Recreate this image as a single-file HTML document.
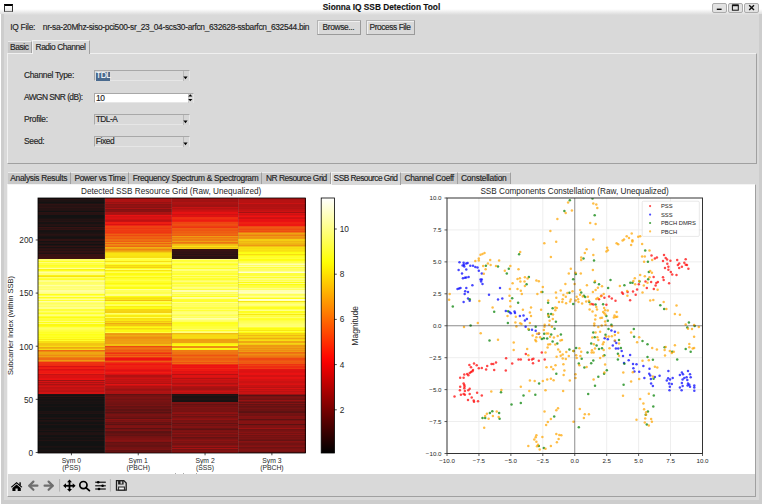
<!DOCTYPE html>
<html><head><meta charset="utf-8">
<style>
*{margin:0;padding:0;box-sizing:border-box}
html,body{width:762px;height:504px;overflow:hidden;background:#d9d9d9;font-family:"Liberation Sans",sans-serif;color:#000}
.a{position:absolute}
.t{position:absolute;font-size:8.4px;letter-spacing:-0.3px;line-height:10px;white-space:nowrap;color:#1e1e1e;-webkit-text-stroke:0.15px #1e1e1e}
.btn{position:absolute;background:#d9d9d9;border:1px solid #b4b4b4;border-right-color:#9a9a9a;border-bottom-color:#9a9a9a;box-shadow:inset 1px 1px 0 #f0f0f0}
.cb{position:absolute;background:#d9d9d9;border:1px solid #a8a8a8;border-bottom-color:#e6e6e6;border-right-color:#e6e6e6}
.tab{position:absolute;background:#c9c9c9;border-top:1px solid #ececec;border-right:1px solid #a0a0a0;height:12px}
.tabs{position:absolute;background:#d9d9d9;border-top:1px solid #f2f2f2;border-left:1px solid #f2f2f2;border-right:1px solid #a0a0a0}
</style></head><body>
<!-- title bar -->
<div class="a" style="left:0;top:0;width:762px;height:16px;background:linear-gradient(#fff 0,#fff 9px,#d9d9d9 15px)"></div>
<div class="a" style="left:4px;top:4px;width:8.8px;height:7.5px;border:1px solid #333;border-top:2px solid #000;border-bottom-color:#777;background:linear-gradient(#fff,#e4e4e4)"></div>
<div class="t" style="left:322.8px;top:1.6px;font-weight:bold;font-size:8.3px;letter-spacing:0;color:#111">Sionna IQ SSB Detection Tool</div>
<div class="a" style="left:712px;top:2.5px;width:14.5px;height:10.5px;border:1px solid #ababab;border-radius:2px;background:#e2e2e2"></div>
<div class="a" style="left:728px;top:2.5px;width:14.5px;height:10.5px;border:1px solid #ababab;border-radius:2px;background:#e2e2e2"></div>
<div class="a" style="left:744.3px;top:2.5px;width:14.5px;height:10.5px;border:1px solid #ababab;border-radius:2px;background:#e2e2e2"></div>
<svg class="a" style="left:700px;top:0" width="62" height="16" viewBox="700 0 62 16">
<rect x="716.8" y="8.6" width="4.8" height="1.4" fill="#111"/>
<rect x="732.4" y="5" width="5.9" height="5.2" fill="none" stroke="#111" stroke-width="1"/>
<rect x="732.4" y="4.6" width="5.9" height="1.6" fill="#111"/>
<path d="M749.2,5.2 L754,10 M754,5.2 L749.2,10" stroke="#111" stroke-width="1.4"/>
</svg>
<!-- window borders -->
<div class="a" style="left:0;top:14px;width:1px;height:490px;background:#fff"></div>
<div class="a" style="left:1px;top:14px;width:3px;height:490px;background:#cdcdcd"></div>
<div class="a" style="left:759px;top:14px;width:3px;height:490px;background:#cdcdcd"></div>
<div class="a" style="left:1px;top:500px;width:761px;height:4px;background:#cdcdcd"></div>

<!-- IQ file row -->
<div class="t" style="left:10.25px;top:22px;letter-spacing:-0.27px">IQ File:</div>
<div class="t" style="left:42.8px;top:22px;letter-spacing:-0.32px">nr-sa-20Mhz-siso-pci500-sr_23_04-scs30-arfcn_632628-ssbarfcn_632544.bin</div>
<div class="btn" style="left:317px;top:20px;width:44px;height:15px"></div>
<div class="t" style="left:322.5px;top:22px;letter-spacing:-0.36px">Browse...</div>
<div class="btn" style="left:366px;top:20px;width:49px;height:15px"></div>
<div class="t" style="left:369.5px;top:22px;letter-spacing:-0.43px">Process File</div>

<!-- top notebook -->
<div class="a" style="left:7px;top:53px;width:750px;height:111px;border:1px solid #f0f0f0;border-right-color:#a0a0a0;border-bottom-color:#a0a0a0"></div>
<div class="tab" style="left:8px;top:41px;width:24px"></div>
<div class="t" style="left:10px;top:42px;letter-spacing:-0.38px">Basic</div>
<div class="tabs" style="left:32px;top:40px;width:58px;height:14px"></div>
<div class="t" style="left:35.5px;top:42px;letter-spacing:-0.42px">Radio Channel</div>

<div class="t" style="left:24px;top:70px">Channel Type:</div>
<div class="cb" style="left:94px;top:70.3px;width:95.5px;height:11.2px"></div><div class="a" style="left:182.5px;top:71.0px;width:6.5px;height:10px;border-left:1px solid #b8b8b8;background:#d6d6d6"></div>
<div class="a" style="left:95.5px;top:71.5px;width:14px;height:9px;background:#4a6a8e"></div>
<div class="t" style="left:96px;top:70.4px;color:#fff;-webkit-text-stroke:0.1px #fff;letter-spacing:-0.4px">TDL</div>

<div class="t" style="left:24px;top:92px;letter-spacing:-0.55px">AWGN SNR (dB):</div>
<div class="cb" style="left:94px;top:92.5px;width:99.5px;height:10.5px;background:#fff"></div><div class="a" style="left:188px;top:93.5px;width:5px;height:9px;background:#d9d9d9;border-left:1px solid #c8c8c8"></div>
<div class="t" style="left:96px;top:92.5px">10</div>

<div class="t" style="left:24px;top:114px">Profile:</div>
<div class="cb" style="left:94px;top:114.3px;width:95.5px;height:11.2px"></div><div class="a" style="left:182.5px;top:115.0px;width:6.5px;height:10px;border-left:1px solid #b8b8b8;background:#d6d6d6"></div>
<div class="t" style="left:95.8px;top:114.2px;letter-spacing:-0.55px">TDL-A</div>

<div class="t" style="left:24px;top:136px">Seed:</div>
<div class="cb" style="left:94px;top:136.3px;width:95.5px;height:11.2px"></div><div class="a" style="left:182.5px;top:137.0px;width:6.5px;height:10px;border-left:1px solid #b8b8b8;background:#d6d6d6"></div>
<div class="t" style="left:95.8px;top:136.2px;letter-spacing:-0.4px">Fixed</div>

<svg class="a" style="left:0;top:0" width="200" height="160" viewBox="0 0 200 160"><polygon points="183.4,76.6 187.6,76.6 185.5,79.2" fill="#000"/><polygon points="183.4,120.6 187.6,120.6 185.5,123.2" fill="#000"/><polygon points="183.4,142.6 187.6,142.6 185.5,145.2" fill="#000"/><polygon points="188.2,96.6 192.4,96.6 190.3,94.2" fill="#000"/><polygon points="188.2,98.9 192.4,98.9 190.3,101.3" fill="#000"/></svg>
<!-- bottom notebook -->
<div class="a" style="left:7px;top:184px;width:749px;height:313px;border:1px solid #f4f4f4;border-right-color:#a0a0a0;border-bottom-color:#a0a0a0"></div>
<div class="a" style="left:8px;top:185px;width:747px;height:289px;background:#fff"></div>

<div class="tab" style="left:8px;top:172px;width:63px"></div>
<div class="t" style="left:10.3px;top:173px;letter-spacing:-0.29px">Analysis Results</div>
<div class="tab" style="left:71px;top:172px;width:57.5px"></div>
<div class="t" style="left:74.4px;top:173px;letter-spacing:-0.3px">Power vs Time</div>
<div class="tab" style="left:128.5px;top:172px;width:133px"></div>
<div class="t" style="left:132.7px;top:173px;letter-spacing:-0.32px">Frequency Spectrum &amp; Spectrogram</div>
<div class="tab" style="left:261.5px;top:172px;width:69px"></div>
<div class="t" style="left:265.9px;top:173px;letter-spacing:-0.47px">NR Resource Grid</div>
<div class="tabs" style="left:330.5px;top:171.8px;width:70px;height:13.5px"></div>
<div class="t" style="left:333.6px;top:173px;letter-spacing:-0.54px">SSB Resource Grid</div>
<div class="tab" style="left:401px;top:172px;width:56.5px"></div>
<div class="t" style="left:404.5px;top:173px;letter-spacing:-0.31px">Channel Coeff</div>
<div class="tab" style="left:457.5px;top:172px;width:53px"></div>
<div class="t" style="left:461px;top:173px;letter-spacing:-0.22px">Constellation</div>

<!-- FIGURE -->
<svg class="a" style="left:0;top:0" width="762" height="504" viewBox="0 0 762 504">
<g shape-rendering="crispEdges">
<rect x="38.00" y="198.00" width="67.12" height="1.113" fill="#1c1212"/>
<rect x="38.00" y="199.06" width="67.12" height="1.113" fill="#271212"/>
<rect x="38.00" y="200.12" width="67.12" height="1.113" fill="#1d1212"/>
<rect x="38.00" y="201.19" width="67.12" height="1.113" fill="#1c1212"/>
<rect x="38.00" y="202.25" width="67.12" height="1.113" fill="#131212"/>
<rect x="38.00" y="203.31" width="67.12" height="1.113" fill="#1d1212"/>
<rect x="38.00" y="204.38" width="67.12" height="1.113" fill="#2f1212"/>
<rect x="38.00" y="205.44" width="67.12" height="1.113" fill="#261212"/>
<rect x="38.00" y="206.50" width="67.12" height="1.113" fill="#2e1212"/>
<rect x="38.00" y="207.56" width="67.12" height="1.113" fill="#231212"/>
<rect x="38.00" y="208.62" width="67.12" height="1.113" fill="#251212"/>
<rect x="38.00" y="209.69" width="67.12" height="1.113" fill="#221212"/>
<rect x="38.00" y="210.75" width="67.12" height="1.113" fill="#121212"/>
<rect x="38.00" y="211.81" width="67.12" height="1.113" fill="#2b1212"/>
<rect x="38.00" y="212.88" width="67.12" height="2.175" fill="#271212"/>
<rect x="38.00" y="215.00" width="67.12" height="2.175" fill="#121212"/>
<rect x="38.00" y="217.12" width="67.12" height="1.113" fill="#141212"/>
<rect x="38.00" y="218.19" width="67.12" height="1.113" fill="#1a1212"/>
<rect x="38.00" y="219.25" width="67.12" height="1.113" fill="#241212"/>
<rect x="38.00" y="220.31" width="67.12" height="1.113" fill="#1f1212"/>
<rect x="38.00" y="221.38" width="67.12" height="1.113" fill="#271212"/>
<rect x="38.00" y="222.44" width="67.12" height="1.113" fill="#171212"/>
<rect x="38.00" y="223.50" width="67.12" height="1.113" fill="#241212"/>
<rect x="38.00" y="224.56" width="67.12" height="1.113" fill="#251212"/>
<rect x="38.00" y="225.62" width="67.12" height="1.113" fill="#171212"/>
<rect x="38.00" y="226.69" width="67.12" height="1.113" fill="#371212"/>
<rect x="38.00" y="227.75" width="67.12" height="1.113" fill="#271212"/>
<rect x="38.00" y="228.81" width="67.12" height="1.113" fill="#301212"/>
<rect x="38.00" y="229.88" width="67.12" height="1.113" fill="#181212"/>
<rect x="38.00" y="230.94" width="67.12" height="1.113" fill="#161212"/>
<rect x="38.00" y="232.00" width="67.12" height="1.113" fill="#1b1212"/>
<rect x="38.00" y="233.06" width="67.12" height="1.113" fill="#1e1212"/>
<rect x="38.00" y="234.12" width="67.12" height="1.113" fill="#281212"/>
<rect x="38.00" y="235.19" width="67.12" height="1.113" fill="#231212"/>
<rect x="38.00" y="236.25" width="67.12" height="1.113" fill="#1a1212"/>
<rect x="38.00" y="237.31" width="67.12" height="1.113" fill="#131212"/>
<rect x="38.00" y="238.38" width="67.12" height="1.113" fill="#191212"/>
<rect x="38.00" y="239.44" width="67.12" height="1.113" fill="#301212"/>
<rect x="38.00" y="240.50" width="67.12" height="1.113" fill="#151212"/>
<rect x="38.00" y="241.56" width="67.12" height="1.113" fill="#231212"/>
<rect x="38.00" y="242.62" width="67.12" height="1.113" fill="#261212"/>
<rect x="38.00" y="243.69" width="67.12" height="1.113" fill="#121212"/>
<rect x="38.00" y="244.75" width="67.12" height="1.113" fill="#211212"/>
<rect x="38.00" y="245.81" width="67.12" height="1.113" fill="#311212"/>
<rect x="38.00" y="246.88" width="67.12" height="1.113" fill="#181212"/>
<rect x="38.00" y="247.94" width="67.12" height="1.113" fill="#2a1212"/>
<rect x="38.00" y="249.00" width="67.12" height="1.113" fill="#2d1212"/>
<rect x="38.00" y="250.06" width="67.12" height="1.113" fill="#261212"/>
<rect x="38.00" y="251.12" width="67.12" height="1.113" fill="#351212"/>
<rect x="38.00" y="252.19" width="67.12" height="1.113" fill="#2f1212"/>
<rect x="38.00" y="253.25" width="67.12" height="1.113" fill="#211212"/>
<rect x="38.00" y="254.31" width="67.12" height="1.113" fill="#3a1212"/>
<rect x="38.00" y="255.38" width="67.12" height="1.113" fill="#381212"/>
<rect x="38.00" y="256.44" width="67.12" height="1.113" fill="#3c1212"/>
<rect x="38.00" y="257.50" width="67.12" height="1.113" fill="#421212"/>
<rect x="38.00" y="258.56" width="67.12" height="1.113" fill="#ffff6d"/>
<rect x="38.00" y="259.62" width="67.12" height="1.113" fill="#ffff61"/>
<rect x="38.00" y="260.69" width="67.12" height="1.113" fill="#ffff21"/>
<rect x="38.00" y="261.75" width="67.12" height="1.113" fill="#ffff78"/>
<rect x="38.00" y="262.81" width="67.12" height="1.113" fill="#ffff40"/>
<rect x="38.00" y="263.88" width="67.12" height="1.113" fill="#ffff47"/>
<rect x="38.00" y="264.94" width="67.12" height="1.113" fill="#ffff22"/>
<rect x="38.00" y="266.00" width="67.12" height="1.113" fill="#ffff30"/>
<rect x="38.00" y="267.06" width="67.12" height="1.113" fill="#ffff44"/>
<rect x="38.00" y="268.12" width="67.12" height="1.113" fill="#ffff97"/>
<rect x="38.00" y="269.19" width="67.12" height="1.113" fill="#fbf112"/>
<rect x="38.00" y="270.25" width="67.12" height="1.113" fill="#feff1a"/>
<rect x="38.00" y="271.31" width="67.12" height="1.113" fill="#ffff67"/>
<rect x="38.00" y="272.38" width="67.12" height="1.113" fill="#ffff9e"/>
<rect x="38.00" y="273.44" width="67.12" height="1.113" fill="#ffff76"/>
<rect x="38.00" y="274.50" width="67.12" height="1.113" fill="#fcf512"/>
<rect x="38.00" y="275.56" width="67.12" height="1.113" fill="#f8e112"/>
<rect x="38.00" y="276.62" width="67.12" height="1.113" fill="#ffff6c"/>
<rect x="38.00" y="277.69" width="67.12" height="1.113" fill="#ffff3b"/>
<rect x="38.00" y="278.75" width="67.12" height="1.113" fill="#ffff29"/>
<rect x="38.00" y="279.81" width="67.12" height="1.113" fill="#ffff88"/>
<rect x="38.00" y="280.88" width="67.12" height="1.113" fill="#ffff8e"/>
<rect x="38.00" y="281.94" width="67.12" height="1.113" fill="#ffff63"/>
<rect x="38.00" y="283.00" width="67.12" height="1.113" fill="#ffff67"/>
<rect x="38.00" y="284.06" width="67.12" height="1.113" fill="#ffff70"/>
<rect x="38.00" y="285.12" width="67.12" height="1.113" fill="#ffffa5"/>
<rect x="38.00" y="286.19" width="67.12" height="1.113" fill="#ffff78"/>
<rect x="38.00" y="287.25" width="67.12" height="1.113" fill="#ffff74"/>
<rect x="38.00" y="288.31" width="67.12" height="1.113" fill="#ffff82"/>
<rect x="38.00" y="289.38" width="67.12" height="1.113" fill="#ffff70"/>
<rect x="38.00" y="290.44" width="67.12" height="1.113" fill="#ffffa1"/>
<rect x="38.00" y="291.50" width="67.12" height="1.113" fill="#ffff92"/>
<rect x="38.00" y="292.56" width="67.12" height="1.113" fill="#ffff80"/>
<rect x="38.00" y="293.62" width="67.12" height="1.113" fill="#feff17"/>
<rect x="38.00" y="294.69" width="67.12" height="1.113" fill="#ffff4e"/>
<rect x="38.00" y="295.75" width="67.12" height="1.113" fill="#ffff8a"/>
<rect x="38.00" y="296.81" width="67.12" height="1.113" fill="#ffff1b"/>
<rect x="38.00" y="297.88" width="67.12" height="1.113" fill="#ffff5e"/>
<rect x="38.00" y="298.94" width="67.12" height="1.113" fill="#ffff8e"/>
<rect x="38.00" y="300.00" width="67.12" height="1.113" fill="#ffff2d"/>
<rect x="38.00" y="301.06" width="67.12" height="1.113" fill="#ffffa5"/>
<rect x="38.00" y="302.12" width="67.12" height="1.113" fill="#ffff78"/>
<rect x="38.00" y="303.19" width="67.12" height="1.113" fill="#ffff5a"/>
<rect x="38.00" y="304.25" width="67.12" height="1.113" fill="#ffff6d"/>
<rect x="38.00" y="305.31" width="67.12" height="1.113" fill="#ffff7a"/>
<rect x="38.00" y="306.38" width="67.12" height="1.113" fill="#ffff63"/>
<rect x="38.00" y="307.44" width="67.12" height="1.113" fill="#ffff8c"/>
<rect x="38.00" y="308.50" width="67.12" height="1.113" fill="#ffff33"/>
<rect x="38.00" y="309.56" width="67.12" height="1.113" fill="#ffff3b"/>
<rect x="38.00" y="310.62" width="67.12" height="1.113" fill="#ffff70"/>
<rect x="38.00" y="311.69" width="67.12" height="1.113" fill="#ffff49"/>
<rect x="38.00" y="312.75" width="67.12" height="1.113" fill="#ffff26"/>
<rect x="38.00" y="313.81" width="67.12" height="1.113" fill="#ffff69"/>
<rect x="38.00" y="314.88" width="67.12" height="1.113" fill="#ffff7b"/>
<rect x="38.00" y="315.94" width="67.12" height="1.113" fill="#ffff33"/>
<rect x="38.00" y="317.00" width="67.12" height="1.113" fill="#fdfc12"/>
<rect x="38.00" y="318.06" width="67.12" height="1.113" fill="#ffff3c"/>
<rect x="38.00" y="319.12" width="67.12" height="1.113" fill="#ffff3a"/>
<rect x="38.00" y="320.19" width="67.12" height="1.113" fill="#ffff34"/>
<rect x="38.00" y="321.25" width="67.12" height="1.113" fill="#ffff72"/>
<rect x="38.00" y="322.31" width="67.12" height="1.113" fill="#feff16"/>
<rect x="38.00" y="323.38" width="67.12" height="1.113" fill="#ffff6a"/>
<rect x="38.00" y="324.44" width="67.12" height="1.113" fill="#fcf912"/>
<rect x="38.00" y="325.50" width="67.12" height="1.113" fill="#ffff1c"/>
<rect x="38.00" y="326.56" width="67.12" height="1.113" fill="#ffff4f"/>
<rect x="38.00" y="327.62" width="67.12" height="1.113" fill="#ffff61"/>
<rect x="38.00" y="328.69" width="67.12" height="1.113" fill="#ffff55"/>
<rect x="38.00" y="329.75" width="67.12" height="1.113" fill="#ffff41"/>
<rect x="38.00" y="330.81" width="67.12" height="1.113" fill="#ffff38"/>
<rect x="38.00" y="331.88" width="67.12" height="1.113" fill="#ffff25"/>
<rect x="38.00" y="332.94" width="67.12" height="1.113" fill="#ffff2f"/>
<rect x="38.00" y="334.00" width="67.12" height="1.113" fill="#feff17"/>
<rect x="38.00" y="335.06" width="67.12" height="1.113" fill="#ffff22"/>
<rect x="38.00" y="336.12" width="67.12" height="1.113" fill="#ffff28"/>
<rect x="38.00" y="337.19" width="67.12" height="1.113" fill="#fefe16"/>
<rect x="38.00" y="338.25" width="67.12" height="1.113" fill="#ffff29"/>
<rect x="38.00" y="339.31" width="67.12" height="1.113" fill="#faee12"/>
<rect x="38.00" y="340.38" width="67.12" height="1.113" fill="#ffff2b"/>
<rect x="38.00" y="341.44" width="67.12" height="1.113" fill="#f8df12"/>
<rect x="38.00" y="342.50" width="67.12" height="1.113" fill="#f3c712"/>
<rect x="38.00" y="343.56" width="67.12" height="1.113" fill="#f3c412"/>
<rect x="38.00" y="344.62" width="67.12" height="1.113" fill="#f4c912"/>
<rect x="38.00" y="345.69" width="67.12" height="1.113" fill="#f7dd12"/>
<rect x="38.00" y="346.75" width="67.12" height="1.113" fill="#eea812"/>
<rect x="38.00" y="347.81" width="67.12" height="1.113" fill="#f0b712"/>
<rect x="38.00" y="348.88" width="67.12" height="1.113" fill="#f6d912"/>
<rect x="38.00" y="349.94" width="67.12" height="1.113" fill="#ee6812"/>
<rect x="38.00" y="351.00" width="67.12" height="1.113" fill="#ee8812"/>
<rect x="38.00" y="352.06" width="67.12" height="2.175" fill="#eea612"/>
<rect x="38.00" y="354.19" width="67.12" height="1.113" fill="#ee9f12"/>
<rect x="38.00" y="355.25" width="67.12" height="1.113" fill="#ee8b12"/>
<rect x="38.00" y="356.31" width="67.12" height="1.113" fill="#eea212"/>
<rect x="38.00" y="357.38" width="67.12" height="1.113" fill="#ee7e12"/>
<rect x="38.00" y="358.44" width="67.12" height="1.113" fill="#ee6d12"/>
<rect x="38.00" y="359.50" width="67.12" height="1.113" fill="#ee9912"/>
<rect x="38.00" y="360.56" width="67.12" height="1.113" fill="#ee7412"/>
<rect x="38.00" y="361.62" width="67.12" height="1.113" fill="#ee3112"/>
<rect x="38.00" y="362.69" width="67.12" height="1.113" fill="#ee3312"/>
<rect x="38.00" y="363.75" width="67.12" height="1.113" fill="#ee2d12"/>
<rect x="38.00" y="364.81" width="67.12" height="1.113" fill="#ee2b12"/>
<rect x="38.00" y="365.88" width="67.12" height="1.113" fill="#d71212"/>
<rect x="38.00" y="366.94" width="67.12" height="1.113" fill="#ee1b12"/>
<rect x="38.00" y="368.00" width="67.12" height="1.113" fill="#ee2012"/>
<rect x="38.00" y="369.06" width="67.12" height="1.113" fill="#d81212"/>
<rect x="38.00" y="370.12" width="67.12" height="1.113" fill="#e71212"/>
<rect x="38.00" y="371.19" width="67.12" height="1.113" fill="#ee1a12"/>
<rect x="38.00" y="372.25" width="67.12" height="1.113" fill="#ee1612"/>
<rect x="38.00" y="373.31" width="67.12" height="1.113" fill="#ee1f12"/>
<rect x="38.00" y="374.38" width="67.12" height="1.113" fill="#c61212"/>
<rect x="38.00" y="375.44" width="67.12" height="1.113" fill="#da1212"/>
<rect x="38.00" y="376.50" width="67.12" height="1.113" fill="#d81212"/>
<rect x="38.00" y="377.56" width="67.12" height="1.113" fill="#e51212"/>
<rect x="38.00" y="378.62" width="67.12" height="1.113" fill="#eb1212"/>
<rect x="38.00" y="379.69" width="67.12" height="1.113" fill="#9d1212"/>
<rect x="38.00" y="380.75" width="67.12" height="1.113" fill="#d81212"/>
<rect x="38.00" y="381.81" width="67.12" height="1.113" fill="#ae1212"/>
<rect x="38.00" y="382.88" width="67.12" height="1.113" fill="#cf1212"/>
<rect x="38.00" y="383.94" width="67.12" height="1.113" fill="#ab1212"/>
<rect x="38.00" y="385.00" width="67.12" height="1.113" fill="#c41212"/>
<rect x="38.00" y="386.06" width="67.12" height="1.113" fill="#d31212"/>
<rect x="38.00" y="387.12" width="67.12" height="1.113" fill="#bd1212"/>
<rect x="38.00" y="388.19" width="67.12" height="1.113" fill="#c11212"/>
<rect x="38.00" y="389.25" width="67.12" height="1.113" fill="#c91212"/>
<rect x="38.00" y="390.31" width="67.12" height="1.113" fill="#be1212"/>
<rect x="38.00" y="391.38" width="67.12" height="1.113" fill="#b91212"/>
<rect x="38.00" y="392.44" width="67.12" height="1.113" fill="#d11212"/>
<rect x="38.00" y="393.50" width="67.12" height="1.113" fill="#1e1212"/>
<rect x="38.00" y="394.56" width="67.12" height="1.113" fill="#131212"/>
<rect x="38.00" y="395.62" width="67.12" height="1.113" fill="#2b1212"/>
<rect x="38.00" y="396.69" width="67.12" height="1.113" fill="#121212"/>
<rect x="38.00" y="397.75" width="67.12" height="1.113" fill="#1d1212"/>
<rect x="38.00" y="398.81" width="67.12" height="1.113" fill="#131212"/>
<rect x="38.00" y="399.88" width="67.12" height="1.113" fill="#161212"/>
<rect x="38.00" y="400.94" width="67.12" height="1.113" fill="#1b1212"/>
<rect x="38.00" y="402.00" width="67.12" height="1.113" fill="#171212"/>
<rect x="38.00" y="403.06" width="67.12" height="1.113" fill="#1a1212"/>
<rect x="38.00" y="404.12" width="67.12" height="2.175" fill="#121212"/>
<rect x="38.00" y="406.25" width="67.12" height="1.113" fill="#1a1212"/>
<rect x="38.00" y="407.31" width="67.12" height="3.237" fill="#121212"/>
<rect x="38.00" y="410.50" width="67.12" height="1.113" fill="#1f1212"/>
<rect x="38.00" y="411.56" width="67.12" height="1.113" fill="#1b1212"/>
<rect x="38.00" y="412.62" width="67.12" height="1.113" fill="#211212"/>
<rect x="38.00" y="413.69" width="67.12" height="1.113" fill="#121212"/>
<rect x="38.00" y="414.75" width="67.12" height="1.113" fill="#151212"/>
<rect x="38.00" y="415.81" width="67.12" height="1.113" fill="#121212"/>
<rect x="38.00" y="416.88" width="67.12" height="1.113" fill="#1b1212"/>
<rect x="38.00" y="417.94" width="67.12" height="1.113" fill="#221212"/>
<rect x="38.00" y="419.00" width="67.12" height="1.113" fill="#121212"/>
<rect x="38.00" y="420.06" width="67.12" height="1.113" fill="#221212"/>
<rect x="38.00" y="421.12" width="67.12" height="1.113" fill="#1d1212"/>
<rect x="38.00" y="422.19" width="67.12" height="1.113" fill="#141212"/>
<rect x="38.00" y="423.25" width="67.12" height="1.113" fill="#121212"/>
<rect x="38.00" y="424.31" width="67.12" height="1.113" fill="#201212"/>
<rect x="38.00" y="425.38" width="67.12" height="1.113" fill="#141212"/>
<rect x="38.00" y="426.44" width="67.12" height="1.113" fill="#121212"/>
<rect x="38.00" y="427.50" width="67.12" height="2.175" fill="#181212"/>
<rect x="38.00" y="429.62" width="67.12" height="1.113" fill="#211212"/>
<rect x="38.00" y="430.69" width="67.12" height="1.113" fill="#121212"/>
<rect x="38.00" y="431.75" width="67.12" height="1.113" fill="#1e1212"/>
<rect x="38.00" y="432.81" width="67.12" height="2.175" fill="#211212"/>
<rect x="38.00" y="434.94" width="67.12" height="1.113" fill="#141212"/>
<rect x="38.00" y="436.00" width="67.12" height="1.113" fill="#121212"/>
<rect x="38.00" y="437.06" width="67.12" height="1.113" fill="#1d1212"/>
<rect x="38.00" y="438.12" width="67.12" height="2.175" fill="#161212"/>
<rect x="38.00" y="440.25" width="67.12" height="1.113" fill="#211212"/>
<rect x="38.00" y="441.31" width="67.12" height="1.113" fill="#131212"/>
<rect x="38.00" y="442.38" width="67.12" height="3.237" fill="#121212"/>
<rect x="38.00" y="445.56" width="67.12" height="1.113" fill="#1c1212"/>
<rect x="38.00" y="446.62" width="67.12" height="1.113" fill="#181212"/>
<rect x="38.00" y="447.69" width="67.12" height="1.113" fill="#121212"/>
<rect x="38.00" y="448.75" width="67.12" height="1.113" fill="#151212"/>
<rect x="38.00" y="449.81" width="67.12" height="1.113" fill="#1c1212"/>
<rect x="38.00" y="450.88" width="67.12" height="1.113" fill="#161212"/>
<rect x="38.00" y="451.94" width="67.12" height="1.113" fill="#201212"/>
<rect x="104.83" y="198.00" width="67.12" height="1.113" fill="#a81212"/>
<rect x="104.83" y="199.06" width="67.12" height="1.113" fill="#ae1212"/>
<rect x="104.83" y="200.12" width="67.12" height="1.113" fill="#ad1212"/>
<rect x="104.83" y="201.19" width="67.12" height="1.113" fill="#af1212"/>
<rect x="104.83" y="202.25" width="67.12" height="1.113" fill="#961212"/>
<rect x="104.83" y="203.31" width="67.12" height="1.113" fill="#a71212"/>
<rect x="104.83" y="204.38" width="67.12" height="1.113" fill="#891212"/>
<rect x="104.83" y="205.44" width="67.12" height="1.113" fill="#921212"/>
<rect x="104.83" y="206.50" width="67.12" height="1.113" fill="#881212"/>
<rect x="104.83" y="207.56" width="67.12" height="1.113" fill="#a91212"/>
<rect x="104.83" y="208.62" width="67.12" height="1.113" fill="#811212"/>
<rect x="104.83" y="209.69" width="67.12" height="1.113" fill="#881212"/>
<rect x="104.83" y="210.75" width="67.12" height="1.113" fill="#871212"/>
<rect x="104.83" y="211.81" width="67.12" height="1.113" fill="#ad1212"/>
<rect x="104.83" y="212.88" width="67.12" height="1.113" fill="#a91212"/>
<rect x="104.83" y="213.94" width="67.12" height="1.113" fill="#af1212"/>
<rect x="104.83" y="215.00" width="67.12" height="1.113" fill="#ea1212"/>
<rect x="104.83" y="216.06" width="67.12" height="1.113" fill="#d21212"/>
<rect x="104.83" y="217.12" width="67.12" height="1.113" fill="#d81212"/>
<rect x="104.83" y="218.19" width="67.12" height="1.113" fill="#dd1212"/>
<rect x="104.83" y="219.25" width="67.12" height="1.113" fill="#cd1212"/>
<rect x="104.83" y="220.31" width="67.12" height="1.113" fill="#be1212"/>
<rect x="104.83" y="221.38" width="67.12" height="1.113" fill="#c61212"/>
<rect x="104.83" y="222.44" width="67.12" height="1.113" fill="#ee1d12"/>
<rect x="104.83" y="223.50" width="67.12" height="1.113" fill="#dc1212"/>
<rect x="104.83" y="224.56" width="67.12" height="1.113" fill="#ee2812"/>
<rect x="104.83" y="225.62" width="67.12" height="1.113" fill="#ee4312"/>
<rect x="104.83" y="226.69" width="67.12" height="1.113" fill="#ee4012"/>
<rect x="104.83" y="227.75" width="67.12" height="1.113" fill="#ee3512"/>
<rect x="104.83" y="228.81" width="67.12" height="1.113" fill="#ee4212"/>
<rect x="104.83" y="229.88" width="67.12" height="1.113" fill="#ee3912"/>
<rect x="104.83" y="230.94" width="67.12" height="1.113" fill="#ee3a12"/>
<rect x="104.83" y="232.00" width="67.12" height="1.113" fill="#ee3512"/>
<rect x="104.83" y="233.06" width="67.12" height="1.113" fill="#ee4512"/>
<rect x="104.83" y="234.12" width="67.12" height="1.113" fill="#ee5f12"/>
<rect x="104.83" y="235.19" width="67.12" height="1.113" fill="#ee4812"/>
<rect x="104.83" y="236.25" width="67.12" height="1.113" fill="#ee5f12"/>
<rect x="104.83" y="237.31" width="67.12" height="1.113" fill="#ee6212"/>
<rect x="104.83" y="238.38" width="67.12" height="1.113" fill="#ee5712"/>
<rect x="104.83" y="239.44" width="67.12" height="1.113" fill="#ee6e12"/>
<rect x="104.83" y="240.50" width="67.12" height="1.113" fill="#ee5e12"/>
<rect x="104.83" y="241.56" width="67.12" height="1.113" fill="#ee8d12"/>
<rect x="104.83" y="242.62" width="67.12" height="1.113" fill="#ee6112"/>
<rect x="104.83" y="243.69" width="67.12" height="1.113" fill="#ee8d12"/>
<rect x="104.83" y="244.75" width="67.12" height="1.113" fill="#ee7d12"/>
<rect x="104.83" y="245.81" width="67.12" height="1.113" fill="#ee6812"/>
<rect x="104.83" y="246.88" width="67.12" height="1.113" fill="#efb312"/>
<rect x="104.83" y="247.94" width="67.12" height="1.113" fill="#eea312"/>
<rect x="104.83" y="249.00" width="67.12" height="1.113" fill="#ee8412"/>
<rect x="104.83" y="250.06" width="67.12" height="1.113" fill="#ee9912"/>
<rect x="104.83" y="251.12" width="67.12" height="1.113" fill="#eeac12"/>
<rect x="104.83" y="252.19" width="67.12" height="1.113" fill="#f4ce12"/>
<rect x="104.83" y="253.25" width="67.12" height="1.113" fill="#f9e412"/>
<rect x="104.83" y="254.31" width="67.12" height="1.113" fill="#f9e512"/>
<rect x="104.83" y="255.38" width="67.12" height="1.113" fill="#f9e412"/>
<rect x="104.83" y="256.44" width="67.12" height="1.113" fill="#f8df12"/>
<rect x="104.83" y="257.50" width="67.12" height="1.113" fill="#ffff57"/>
<rect x="104.83" y="258.56" width="67.12" height="1.113" fill="#ffff40"/>
<rect x="104.83" y="259.62" width="67.12" height="1.113" fill="#ffff39"/>
<rect x="104.83" y="260.69" width="67.12" height="1.113" fill="#f8df12"/>
<rect x="104.83" y="261.75" width="67.12" height="1.113" fill="#ffff48"/>
<rect x="104.83" y="262.81" width="67.12" height="1.113" fill="#ffff56"/>
<rect x="104.83" y="263.88" width="67.12" height="1.113" fill="#ffff21"/>
<rect x="104.83" y="264.94" width="67.12" height="1.113" fill="#f6d812"/>
<rect x="104.83" y="266.00" width="67.12" height="1.113" fill="#f9e612"/>
<rect x="104.83" y="267.06" width="67.12" height="1.113" fill="#f5d112"/>
<rect x="104.83" y="268.12" width="67.12" height="1.113" fill="#ffff23"/>
<rect x="104.83" y="269.19" width="67.12" height="1.113" fill="#ffff6c"/>
<rect x="104.83" y="270.25" width="67.12" height="1.113" fill="#f9e512"/>
<rect x="104.83" y="271.31" width="67.12" height="1.113" fill="#ffff2b"/>
<rect x="104.83" y="272.38" width="67.12" height="1.113" fill="#ffff58"/>
<rect x="104.83" y="273.44" width="67.12" height="1.113" fill="#fdfb12"/>
<rect x="104.83" y="274.50" width="67.12" height="1.113" fill="#ffff26"/>
<rect x="104.83" y="275.56" width="67.12" height="1.113" fill="#ffff4c"/>
<rect x="104.83" y="276.62" width="67.12" height="1.113" fill="#fcf812"/>
<rect x="104.83" y="277.69" width="67.12" height="1.113" fill="#ffff28"/>
<rect x="104.83" y="278.75" width="67.12" height="1.113" fill="#ffff37"/>
<rect x="104.83" y="279.81" width="67.12" height="1.113" fill="#ffff4b"/>
<rect x="104.83" y="280.88" width="67.12" height="1.113" fill="#ffff2c"/>
<rect x="104.83" y="281.94" width="67.12" height="1.113" fill="#ffff26"/>
<rect x="104.83" y="283.00" width="67.12" height="1.113" fill="#fcf712"/>
<rect x="104.83" y="284.06" width="67.12" height="1.113" fill="#ffff21"/>
<rect x="104.83" y="285.12" width="67.12" height="1.113" fill="#ffff50"/>
<rect x="104.83" y="286.19" width="67.12" height="1.113" fill="#ffff33"/>
<rect x="104.83" y="287.25" width="67.12" height="1.113" fill="#fdfd12"/>
<rect x="104.83" y="288.31" width="67.12" height="1.113" fill="#fdfe12"/>
<rect x="104.83" y="289.38" width="67.12" height="1.113" fill="#ffff94"/>
<rect x="104.83" y="290.44" width="67.12" height="1.113" fill="#ffff5c"/>
<rect x="104.83" y="291.50" width="67.12" height="1.113" fill="#ffff4a"/>
<rect x="104.83" y="292.56" width="67.12" height="1.113" fill="#ffff52"/>
<rect x="104.83" y="293.62" width="67.12" height="1.113" fill="#ffff87"/>
<rect x="104.83" y="294.69" width="67.12" height="1.113" fill="#ffff85"/>
<rect x="104.83" y="295.75" width="67.12" height="1.113" fill="#fdfe12"/>
<rect x="104.83" y="296.81" width="67.12" height="1.113" fill="#f9e812"/>
<rect x="104.83" y="297.88" width="67.12" height="1.113" fill="#f8df12"/>
<rect x="104.83" y="298.94" width="67.12" height="1.113" fill="#faea12"/>
<rect x="104.83" y="300.00" width="67.12" height="1.113" fill="#f2bf12"/>
<rect x="104.83" y="301.06" width="67.12" height="1.113" fill="#ffff4d"/>
<rect x="104.83" y="302.12" width="67.12" height="1.113" fill="#ffff35"/>
<rect x="104.83" y="303.19" width="67.12" height="1.113" fill="#fdfe13"/>
<rect x="104.83" y="304.25" width="67.12" height="1.113" fill="#ffff56"/>
<rect x="104.83" y="305.31" width="67.12" height="1.113" fill="#ffff66"/>
<rect x="104.83" y="306.38" width="67.12" height="1.113" fill="#faef12"/>
<rect x="104.83" y="307.44" width="67.12" height="1.113" fill="#fefe14"/>
<rect x="104.83" y="308.50" width="67.12" height="1.113" fill="#f6d712"/>
<rect x="104.83" y="309.56" width="67.12" height="1.113" fill="#f6d612"/>
<rect x="104.83" y="310.62" width="67.12" height="1.113" fill="#f5d312"/>
<rect x="104.83" y="311.69" width="67.12" height="1.113" fill="#f5cf12"/>
<rect x="104.83" y="312.75" width="67.12" height="1.113" fill="#ffff68"/>
<rect x="104.83" y="313.81" width="67.12" height="1.113" fill="#ffff44"/>
<rect x="104.83" y="314.88" width="67.12" height="1.113" fill="#faee12"/>
<rect x="104.83" y="315.94" width="67.12" height="1.113" fill="#faea12"/>
<rect x="104.83" y="317.00" width="67.12" height="1.113" fill="#ffff5a"/>
<rect x="104.83" y="318.06" width="67.12" height="1.113" fill="#f8e012"/>
<rect x="104.83" y="319.12" width="67.12" height="1.113" fill="#f9e512"/>
<rect x="104.83" y="320.19" width="67.12" height="1.113" fill="#faeb12"/>
<rect x="104.83" y="321.25" width="67.12" height="1.113" fill="#f3c812"/>
<rect x="104.83" y="322.31" width="67.12" height="1.113" fill="#f7dd12"/>
<rect x="104.83" y="323.38" width="67.12" height="1.113" fill="#eeab12"/>
<rect x="104.83" y="324.44" width="67.12" height="1.113" fill="#f3c612"/>
<rect x="104.83" y="325.50" width="67.12" height="1.113" fill="#faeb12"/>
<rect x="104.83" y="326.56" width="67.12" height="1.113" fill="#fdfc12"/>
<rect x="104.83" y="327.62" width="67.12" height="1.113" fill="#f6d712"/>
<rect x="104.83" y="328.69" width="67.12" height="1.113" fill="#f9e912"/>
<rect x="104.83" y="329.75" width="67.12" height="1.113" fill="#fcfa12"/>
<rect x="104.83" y="330.81" width="67.12" height="1.113" fill="#fcf712"/>
<rect x="104.83" y="331.88" width="67.12" height="1.113" fill="#ffff40"/>
<rect x="104.83" y="332.94" width="67.12" height="1.113" fill="#eea112"/>
<rect x="104.83" y="334.00" width="67.12" height="1.113" fill="#ee9712"/>
<rect x="104.83" y="335.06" width="67.12" height="1.113" fill="#eeac12"/>
<rect x="104.83" y="336.12" width="67.12" height="1.113" fill="#ee9e12"/>
<rect x="104.83" y="337.19" width="67.12" height="1.113" fill="#ee8d12"/>
<rect x="104.83" y="338.25" width="67.12" height="1.113" fill="#ee9112"/>
<rect x="104.83" y="339.31" width="67.12" height="1.113" fill="#ee9d12"/>
<rect x="104.83" y="340.38" width="67.12" height="1.113" fill="#ee9b12"/>
<rect x="104.83" y="341.44" width="67.12" height="1.113" fill="#eea012"/>
<rect x="104.83" y="342.50" width="67.12" height="1.113" fill="#ee9d12"/>
<rect x="104.83" y="343.56" width="67.12" height="1.113" fill="#f2bf12"/>
<rect x="104.83" y="344.62" width="67.12" height="1.113" fill="#f1bd12"/>
<rect x="104.83" y="345.69" width="67.12" height="1.113" fill="#ee4612"/>
<rect x="104.83" y="346.75" width="67.12" height="1.113" fill="#ee6912"/>
<rect x="104.83" y="347.81" width="67.12" height="1.113" fill="#ee7612"/>
<rect x="104.83" y="348.88" width="67.12" height="1.113" fill="#ee6812"/>
<rect x="104.83" y="349.94" width="67.12" height="1.113" fill="#ee5912"/>
<rect x="104.83" y="351.00" width="67.12" height="1.113" fill="#ee6612"/>
<rect x="104.83" y="352.06" width="67.12" height="1.113" fill="#ee4712"/>
<rect x="104.83" y="353.12" width="67.12" height="1.113" fill="#ee3212"/>
<rect x="104.83" y="354.19" width="67.12" height="1.113" fill="#ee5b12"/>
<rect x="104.83" y="355.25" width="67.12" height="1.113" fill="#ee4412"/>
<rect x="104.83" y="356.31" width="67.12" height="1.113" fill="#ee6712"/>
<rect x="104.83" y="357.38" width="67.12" height="1.113" fill="#ee3112"/>
<rect x="104.83" y="358.44" width="67.12" height="1.113" fill="#ed1212"/>
<rect x="104.83" y="359.50" width="67.12" height="1.113" fill="#ee2d12"/>
<rect x="104.83" y="360.56" width="67.12" height="1.113" fill="#ee5b12"/>
<rect x="104.83" y="361.62" width="67.12" height="1.113" fill="#ee3412"/>
<rect x="104.83" y="362.69" width="67.12" height="1.113" fill="#ee1f12"/>
<rect x="104.83" y="363.75" width="67.12" height="1.113" fill="#ee1412"/>
<rect x="104.83" y="364.81" width="67.12" height="2.175" fill="#ee2212"/>
<rect x="104.83" y="366.94" width="67.12" height="1.113" fill="#ee1e12"/>
<rect x="104.83" y="368.00" width="67.12" height="1.113" fill="#ee1d12"/>
<rect x="104.83" y="369.06" width="67.12" height="1.113" fill="#e91212"/>
<rect x="104.83" y="370.12" width="67.12" height="1.113" fill="#db1212"/>
<rect x="104.83" y="371.19" width="67.12" height="1.113" fill="#e61212"/>
<rect x="104.83" y="372.25" width="67.12" height="1.113" fill="#ee1d12"/>
<rect x="104.83" y="373.31" width="67.12" height="1.113" fill="#eb1212"/>
<rect x="104.83" y="374.38" width="67.12" height="1.113" fill="#d31212"/>
<rect x="104.83" y="375.44" width="67.12" height="1.113" fill="#b11212"/>
<rect x="104.83" y="376.50" width="67.12" height="1.113" fill="#c01212"/>
<rect x="104.83" y="377.56" width="67.12" height="1.113" fill="#cf1212"/>
<rect x="104.83" y="378.62" width="67.12" height="1.113" fill="#be1212"/>
<rect x="104.83" y="379.69" width="67.12" height="1.113" fill="#c71212"/>
<rect x="104.83" y="380.75" width="67.12" height="1.113" fill="#be1212"/>
<rect x="104.83" y="381.81" width="67.12" height="1.113" fill="#c41212"/>
<rect x="104.83" y="382.88" width="67.12" height="1.113" fill="#af1212"/>
<rect x="104.83" y="383.94" width="67.12" height="1.113" fill="#e21212"/>
<rect x="104.83" y="385.00" width="67.12" height="1.113" fill="#ca1212"/>
<rect x="104.83" y="386.06" width="67.12" height="1.113" fill="#af1212"/>
<rect x="104.83" y="387.12" width="67.12" height="1.113" fill="#b41212"/>
<rect x="104.83" y="388.19" width="67.12" height="1.113" fill="#ab1212"/>
<rect x="104.83" y="389.25" width="67.12" height="1.113" fill="#9c1212"/>
<rect x="104.83" y="390.31" width="67.12" height="1.113" fill="#a21212"/>
<rect x="104.83" y="391.38" width="67.12" height="1.113" fill="#b31212"/>
<rect x="104.83" y="392.44" width="67.12" height="1.113" fill="#ad1212"/>
<rect x="104.83" y="393.50" width="67.12" height="1.113" fill="#601212"/>
<rect x="104.83" y="394.56" width="67.12" height="1.113" fill="#731212"/>
<rect x="104.83" y="395.62" width="67.12" height="1.113" fill="#751212"/>
<rect x="104.83" y="396.69" width="67.12" height="1.113" fill="#7f1212"/>
<rect x="104.83" y="397.75" width="67.12" height="1.113" fill="#7b1212"/>
<rect x="104.83" y="398.81" width="67.12" height="1.113" fill="#711212"/>
<rect x="104.83" y="399.88" width="67.12" height="1.113" fill="#7c1212"/>
<rect x="104.83" y="400.94" width="67.12" height="1.113" fill="#781212"/>
<rect x="104.83" y="402.00" width="67.12" height="1.113" fill="#741212"/>
<rect x="104.83" y="403.06" width="67.12" height="1.113" fill="#721212"/>
<rect x="104.83" y="404.12" width="67.12" height="1.113" fill="#6e1212"/>
<rect x="104.83" y="405.19" width="67.12" height="1.113" fill="#7a1212"/>
<rect x="104.83" y="406.25" width="67.12" height="1.113" fill="#631212"/>
<rect x="104.83" y="407.31" width="67.12" height="1.113" fill="#691212"/>
<rect x="104.83" y="408.38" width="67.12" height="1.113" fill="#711212"/>
<rect x="104.83" y="409.44" width="67.12" height="1.113" fill="#5e1212"/>
<rect x="104.83" y="410.50" width="67.12" height="1.113" fill="#6c1212"/>
<rect x="104.83" y="411.56" width="67.12" height="1.113" fill="#571212"/>
<rect x="104.83" y="412.62" width="67.12" height="1.113" fill="#691212"/>
<rect x="104.83" y="413.69" width="67.12" height="1.113" fill="#791212"/>
<rect x="104.83" y="414.75" width="67.12" height="1.113" fill="#7a1212"/>
<rect x="104.83" y="415.81" width="67.12" height="1.113" fill="#711212"/>
<rect x="104.83" y="416.88" width="67.12" height="1.113" fill="#6f1212"/>
<rect x="104.83" y="417.94" width="67.12" height="1.113" fill="#5f1212"/>
<rect x="104.83" y="419.00" width="67.12" height="1.113" fill="#8b1212"/>
<rect x="104.83" y="420.06" width="67.12" height="1.113" fill="#791212"/>
<rect x="104.83" y="421.12" width="67.12" height="1.113" fill="#811212"/>
<rect x="104.83" y="422.19" width="67.12" height="1.113" fill="#671212"/>
<rect x="104.83" y="423.25" width="67.12" height="1.113" fill="#701212"/>
<rect x="104.83" y="424.31" width="67.12" height="1.113" fill="#5b1212"/>
<rect x="104.83" y="425.38" width="67.12" height="1.113" fill="#7d1212"/>
<rect x="104.83" y="426.44" width="67.12" height="1.113" fill="#801212"/>
<rect x="104.83" y="427.50" width="67.12" height="1.113" fill="#5a1212"/>
<rect x="104.83" y="428.56" width="67.12" height="1.113" fill="#731212"/>
<rect x="104.83" y="429.62" width="67.12" height="1.113" fill="#7c1212"/>
<rect x="104.83" y="430.69" width="67.12" height="1.113" fill="#5c1212"/>
<rect x="104.83" y="431.75" width="67.12" height="1.113" fill="#5b1212"/>
<rect x="104.83" y="432.81" width="67.12" height="1.113" fill="#651212"/>
<rect x="104.83" y="433.88" width="67.12" height="1.113" fill="#6b1212"/>
<rect x="104.83" y="434.94" width="67.12" height="1.113" fill="#611212"/>
<rect x="104.83" y="436.00" width="67.12" height="1.113" fill="#741212"/>
<rect x="104.83" y="437.06" width="67.12" height="1.113" fill="#771212"/>
<rect x="104.83" y="438.12" width="67.12" height="1.113" fill="#7d1212"/>
<rect x="104.83" y="439.19" width="67.12" height="1.113" fill="#7e1212"/>
<rect x="104.83" y="440.25" width="67.12" height="1.113" fill="#881212"/>
<rect x="104.83" y="441.31" width="67.12" height="1.113" fill="#841212"/>
<rect x="104.83" y="442.38" width="67.12" height="1.113" fill="#631212"/>
<rect x="104.83" y="443.44" width="67.12" height="1.113" fill="#6e1212"/>
<rect x="104.83" y="444.50" width="67.12" height="2.175" fill="#661212"/>
<rect x="104.83" y="446.62" width="67.12" height="1.113" fill="#741212"/>
<rect x="104.83" y="447.69" width="67.12" height="1.113" fill="#751212"/>
<rect x="104.83" y="448.75" width="67.12" height="1.113" fill="#7c1212"/>
<rect x="104.83" y="449.81" width="67.12" height="1.113" fill="#601212"/>
<rect x="104.83" y="450.88" width="67.12" height="1.113" fill="#651212"/>
<rect x="104.83" y="451.94" width="67.12" height="1.113" fill="#751212"/>
<rect x="171.65" y="198.00" width="67.12" height="1.113" fill="#a21212"/>
<rect x="171.65" y="199.06" width="67.12" height="1.113" fill="#a11212"/>
<rect x="171.65" y="200.12" width="67.12" height="1.113" fill="#a21212"/>
<rect x="171.65" y="201.19" width="67.12" height="1.113" fill="#a01212"/>
<rect x="171.65" y="202.25" width="67.12" height="1.113" fill="#b01212"/>
<rect x="171.65" y="203.31" width="67.12" height="1.113" fill="#ac1212"/>
<rect x="171.65" y="204.38" width="67.12" height="1.113" fill="#a71212"/>
<rect x="171.65" y="205.44" width="67.12" height="1.113" fill="#a11212"/>
<rect x="171.65" y="206.50" width="67.12" height="1.113" fill="#c71212"/>
<rect x="171.65" y="207.56" width="67.12" height="1.113" fill="#b21212"/>
<rect x="171.65" y="208.62" width="67.12" height="1.113" fill="#c01212"/>
<rect x="171.65" y="209.69" width="67.12" height="1.113" fill="#c81212"/>
<rect x="171.65" y="210.75" width="67.12" height="1.113" fill="#cf1212"/>
<rect x="171.65" y="211.81" width="67.12" height="1.113" fill="#e61212"/>
<rect x="171.65" y="212.88" width="67.12" height="1.113" fill="#e51212"/>
<rect x="171.65" y="213.94" width="67.12" height="1.113" fill="#d01212"/>
<rect x="171.65" y="215.00" width="67.12" height="1.113" fill="#e01212"/>
<rect x="171.65" y="216.06" width="67.12" height="1.113" fill="#df1212"/>
<rect x="171.65" y="217.12" width="67.12" height="1.113" fill="#ee2d12"/>
<rect x="171.65" y="218.19" width="67.12" height="1.113" fill="#ee2f12"/>
<rect x="171.65" y="219.25" width="67.12" height="1.113" fill="#ee2612"/>
<rect x="171.65" y="220.31" width="67.12" height="1.113" fill="#ee1c12"/>
<rect x="171.65" y="221.38" width="67.12" height="1.113" fill="#ee2512"/>
<rect x="171.65" y="222.44" width="67.12" height="1.113" fill="#ee4612"/>
<rect x="171.65" y="223.50" width="67.12" height="1.113" fill="#ee5112"/>
<rect x="171.65" y="224.56" width="67.12" height="1.113" fill="#ee4b12"/>
<rect x="171.65" y="225.62" width="67.12" height="1.113" fill="#ee3d12"/>
<rect x="171.65" y="226.69" width="67.12" height="1.113" fill="#ee3512"/>
<rect x="171.65" y="227.75" width="67.12" height="1.113" fill="#ee5d12"/>
<rect x="171.65" y="228.81" width="67.12" height="1.113" fill="#ee5812"/>
<rect x="171.65" y="229.88" width="67.12" height="1.113" fill="#ee5312"/>
<rect x="171.65" y="230.94" width="67.12" height="1.113" fill="#ee6012"/>
<rect x="171.65" y="232.00" width="67.12" height="1.113" fill="#ee5b12"/>
<rect x="171.65" y="233.06" width="67.12" height="1.113" fill="#ee6312"/>
<rect x="171.65" y="234.12" width="67.12" height="1.113" fill="#ee6912"/>
<rect x="171.65" y="235.19" width="67.12" height="1.113" fill="#ee5c12"/>
<rect x="171.65" y="236.25" width="67.12" height="1.113" fill="#ee9c12"/>
<rect x="171.65" y="237.31" width="67.12" height="1.113" fill="#ee7812"/>
<rect x="171.65" y="238.38" width="67.12" height="1.113" fill="#ee8b12"/>
<rect x="171.65" y="239.44" width="67.12" height="1.113" fill="#ee7e12"/>
<rect x="171.65" y="240.50" width="67.12" height="1.113" fill="#eea112"/>
<rect x="171.65" y="241.56" width="67.12" height="1.113" fill="#ee7212"/>
<rect x="171.65" y="242.62" width="67.12" height="1.113" fill="#ee8812"/>
<rect x="171.65" y="243.69" width="67.12" height="1.113" fill="#f1bc12"/>
<rect x="171.65" y="244.75" width="67.12" height="1.113" fill="#f2c312"/>
<rect x="171.65" y="245.81" width="67.12" height="1.113" fill="#f8e112"/>
<rect x="171.65" y="246.88" width="67.12" height="1.113" fill="#f1be12"/>
<rect x="171.65" y="247.94" width="67.12" height="1.113" fill="#f4ce12"/>
<rect x="171.65" y="249.00" width="67.12" height="1.113" fill="#361212"/>
<rect x="171.65" y="250.06" width="67.12" height="1.113" fill="#381212"/>
<rect x="171.65" y="251.12" width="67.12" height="1.113" fill="#341212"/>
<rect x="171.65" y="252.19" width="67.12" height="1.113" fill="#2f1212"/>
<rect x="171.65" y="253.25" width="67.12" height="1.113" fill="#341212"/>
<rect x="171.65" y="254.31" width="67.12" height="1.113" fill="#271212"/>
<rect x="171.65" y="255.38" width="67.12" height="1.113" fill="#391212"/>
<rect x="171.65" y="256.44" width="67.12" height="1.113" fill="#281212"/>
<rect x="171.65" y="257.50" width="67.12" height="1.113" fill="#321212"/>
<rect x="171.65" y="258.56" width="67.12" height="1.113" fill="#ffff8a"/>
<rect x="171.65" y="259.62" width="67.12" height="1.113" fill="#ffff33"/>
<rect x="171.65" y="260.69" width="67.12" height="1.113" fill="#ffff3d"/>
<rect x="171.65" y="261.75" width="67.12" height="1.113" fill="#ffff68"/>
<rect x="171.65" y="262.81" width="67.12" height="1.113" fill="#ffff3e"/>
<rect x="171.65" y="263.88" width="67.12" height="1.113" fill="#ffff20"/>
<rect x="171.65" y="264.94" width="67.12" height="1.113" fill="#ffff48"/>
<rect x="171.65" y="266.00" width="67.12" height="1.113" fill="#ffff55"/>
<rect x="171.65" y="267.06" width="67.12" height="1.113" fill="#ffff5a"/>
<rect x="171.65" y="268.12" width="67.12" height="1.113" fill="#ffff23"/>
<rect x="171.65" y="269.19" width="67.12" height="1.113" fill="#ffff82"/>
<rect x="171.65" y="270.25" width="67.12" height="1.113" fill="#ffff7f"/>
<rect x="171.65" y="271.31" width="67.12" height="1.113" fill="#ffff43"/>
<rect x="171.65" y="272.38" width="67.12" height="1.113" fill="#ffff4c"/>
<rect x="171.65" y="273.44" width="67.12" height="1.113" fill="#ffff33"/>
<rect x="171.65" y="274.50" width="67.12" height="1.113" fill="#ffff78"/>
<rect x="171.65" y="275.56" width="67.12" height="1.113" fill="#ffff2a"/>
<rect x="171.65" y="276.62" width="67.12" height="1.113" fill="#ffff5e"/>
<rect x="171.65" y="277.69" width="67.12" height="1.113" fill="#ffff33"/>
<rect x="171.65" y="278.75" width="67.12" height="1.113" fill="#ffff2c"/>
<rect x="171.65" y="279.81" width="67.12" height="1.113" fill="#ffff61"/>
<rect x="171.65" y="280.88" width="67.12" height="1.113" fill="#ffff79"/>
<rect x="171.65" y="281.94" width="67.12" height="1.113" fill="#ffff47"/>
<rect x="171.65" y="283.00" width="67.12" height="1.113" fill="#ffff2f"/>
<rect x="171.65" y="284.06" width="67.12" height="1.113" fill="#ffff67"/>
<rect x="171.65" y="285.12" width="67.12" height="1.113" fill="#ffff47"/>
<rect x="171.65" y="286.19" width="67.12" height="1.113" fill="#ffff55"/>
<rect x="171.65" y="287.25" width="67.12" height="1.113" fill="#ffff83"/>
<rect x="171.65" y="288.31" width="67.12" height="1.113" fill="#ffff75"/>
<rect x="171.65" y="289.38" width="67.12" height="1.113" fill="#ffff38"/>
<rect x="171.65" y="290.44" width="67.12" height="1.113" fill="#ffffb2"/>
<rect x="171.65" y="291.50" width="67.12" height="1.113" fill="#ffff5e"/>
<rect x="171.65" y="292.56" width="67.12" height="1.113" fill="#ffff7c"/>
<rect x="171.65" y="293.62" width="67.12" height="1.113" fill="#ffff47"/>
<rect x="171.65" y="294.69" width="67.12" height="1.113" fill="#ffff5e"/>
<rect x="171.65" y="295.75" width="67.12" height="1.113" fill="#ffff20"/>
<rect x="171.65" y="296.81" width="67.12" height="1.113" fill="#ffffa4"/>
<rect x="171.65" y="297.88" width="67.12" height="1.113" fill="#ffff95"/>
<rect x="171.65" y="298.94" width="67.12" height="1.113" fill="#ffff36"/>
<rect x="171.65" y="300.00" width="67.12" height="1.113" fill="#ffff2c"/>
<rect x="171.65" y="301.06" width="67.12" height="1.113" fill="#ffff29"/>
<rect x="171.65" y="302.12" width="67.12" height="1.113" fill="#ffff92"/>
<rect x="171.65" y="303.19" width="67.12" height="1.113" fill="#ffff56"/>
<rect x="171.65" y="304.25" width="67.12" height="1.113" fill="#ffff65"/>
<rect x="171.65" y="305.31" width="67.12" height="1.113" fill="#ffff5d"/>
<rect x="171.65" y="306.38" width="67.12" height="1.113" fill="#ffff65"/>
<rect x="171.65" y="307.44" width="67.12" height="1.113" fill="#ffff41"/>
<rect x="171.65" y="308.50" width="67.12" height="1.113" fill="#ffff6c"/>
<rect x="171.65" y="309.56" width="67.12" height="1.113" fill="#ffff36"/>
<rect x="171.65" y="310.62" width="67.12" height="1.113" fill="#ffff6a"/>
<rect x="171.65" y="311.69" width="67.12" height="1.113" fill="#ffff79"/>
<rect x="171.65" y="312.75" width="67.12" height="1.113" fill="#ffff7f"/>
<rect x="171.65" y="313.81" width="67.12" height="1.113" fill="#ffff66"/>
<rect x="171.65" y="314.88" width="67.12" height="1.113" fill="#ffff4e"/>
<rect x="171.65" y="315.94" width="67.12" height="1.113" fill="#ffff76"/>
<rect x="171.65" y="317.00" width="67.12" height="1.113" fill="#ffff5f"/>
<rect x="171.65" y="318.06" width="67.12" height="1.113" fill="#ffffac"/>
<rect x="171.65" y="319.12" width="67.12" height="1.113" fill="#ffff90"/>
<rect x="171.65" y="320.19" width="67.12" height="1.113" fill="#ffff70"/>
<rect x="171.65" y="321.25" width="67.12" height="1.113" fill="#ffff63"/>
<rect x="171.65" y="322.31" width="67.12" height="1.113" fill="#ffff21"/>
<rect x="171.65" y="323.38" width="67.12" height="1.113" fill="#ffff1b"/>
<rect x="171.65" y="324.44" width="67.12" height="1.113" fill="#ffff2a"/>
<rect x="171.65" y="325.50" width="67.12" height="1.113" fill="#ffff3a"/>
<rect x="171.65" y="326.56" width="67.12" height="1.113" fill="#ffff3f"/>
<rect x="171.65" y="327.62" width="67.12" height="1.113" fill="#ffff41"/>
<rect x="171.65" y="328.69" width="67.12" height="1.113" fill="#ffff67"/>
<rect x="171.65" y="329.75" width="67.12" height="1.113" fill="#ffff21"/>
<rect x="171.65" y="330.81" width="67.12" height="1.113" fill="#ffff6d"/>
<rect x="171.65" y="331.88" width="67.12" height="1.113" fill="#ffff84"/>
<rect x="171.65" y="332.94" width="67.12" height="1.113" fill="#f1ba12"/>
<rect x="171.65" y="334.00" width="67.12" height="1.113" fill="#f5d012"/>
<rect x="171.65" y="335.06" width="67.12" height="1.113" fill="#f7db12"/>
<rect x="171.65" y="336.12" width="67.12" height="1.113" fill="#f7da12"/>
<rect x="171.65" y="337.19" width="67.12" height="1.113" fill="#f7de12"/>
<rect x="171.65" y="338.25" width="67.12" height="1.113" fill="#f5d112"/>
<rect x="171.65" y="339.31" width="67.12" height="1.113" fill="#ee9f12"/>
<rect x="171.65" y="340.38" width="67.12" height="1.113" fill="#ee9d12"/>
<rect x="171.65" y="341.44" width="67.12" height="1.113" fill="#eea112"/>
<rect x="171.65" y="342.50" width="67.12" height="1.113" fill="#f9e812"/>
<rect x="171.65" y="343.56" width="67.12" height="1.113" fill="#fbf412"/>
<rect x="171.65" y="344.62" width="67.12" height="1.113" fill="#fdfe12"/>
<rect x="171.65" y="345.69" width="67.12" height="1.113" fill="#ee8d12"/>
<rect x="171.65" y="346.75" width="67.12" height="1.113" fill="#ee8c12"/>
<rect x="171.65" y="347.81" width="67.12" height="1.113" fill="#fcf612"/>
<rect x="171.65" y="348.88" width="67.12" height="1.113" fill="#faee12"/>
<rect x="171.65" y="349.94" width="67.12" height="1.113" fill="#ee7b12"/>
<rect x="171.65" y="351.00" width="67.12" height="1.113" fill="#ee7c12"/>
<rect x="171.65" y="352.06" width="67.12" height="1.113" fill="#ee7312"/>
<rect x="171.65" y="353.12" width="67.12" height="1.113" fill="#ee7512"/>
<rect x="171.65" y="354.19" width="67.12" height="1.113" fill="#ee6912"/>
<rect x="171.65" y="355.25" width="67.12" height="1.113" fill="#ee5312"/>
<rect x="171.65" y="356.31" width="67.12" height="1.113" fill="#ee6712"/>
<rect x="171.65" y="357.38" width="67.12" height="1.113" fill="#ee6d12"/>
<rect x="171.65" y="358.44" width="67.12" height="1.113" fill="#ee5c12"/>
<rect x="171.65" y="359.50" width="67.12" height="1.113" fill="#ee6112"/>
<rect x="171.65" y="360.56" width="67.12" height="1.113" fill="#ee6d12"/>
<rect x="171.65" y="361.62" width="67.12" height="1.113" fill="#ee5112"/>
<rect x="171.65" y="362.69" width="67.12" height="1.113" fill="#ee6812"/>
<rect x="171.65" y="363.75" width="67.12" height="1.113" fill="#ee3012"/>
<rect x="171.65" y="364.81" width="67.12" height="1.113" fill="#ea1212"/>
<rect x="171.65" y="365.88" width="67.12" height="1.113" fill="#ee1612"/>
<rect x="171.65" y="366.94" width="67.12" height="1.113" fill="#ec1212"/>
<rect x="171.65" y="368.00" width="67.12" height="1.113" fill="#ee2512"/>
<rect x="171.65" y="369.06" width="67.12" height="1.113" fill="#ee1312"/>
<rect x="171.65" y="370.12" width="67.12" height="1.113" fill="#ee1912"/>
<rect x="171.65" y="371.19" width="67.12" height="1.113" fill="#de1212"/>
<rect x="171.65" y="372.25" width="67.12" height="1.113" fill="#e61212"/>
<rect x="171.65" y="373.31" width="67.12" height="1.113" fill="#e41212"/>
<rect x="171.65" y="374.38" width="67.12" height="1.113" fill="#b61212"/>
<rect x="171.65" y="375.44" width="67.12" height="1.113" fill="#df1212"/>
<rect x="171.65" y="376.50" width="67.12" height="1.113" fill="#d61212"/>
<rect x="171.65" y="377.56" width="67.12" height="1.113" fill="#b11212"/>
<rect x="171.65" y="378.62" width="67.12" height="1.113" fill="#d11212"/>
<rect x="171.65" y="379.69" width="67.12" height="1.113" fill="#c41212"/>
<rect x="171.65" y="380.75" width="67.12" height="1.113" fill="#ca1212"/>
<rect x="171.65" y="381.81" width="67.12" height="1.113" fill="#c81212"/>
<rect x="171.65" y="382.88" width="67.12" height="1.113" fill="#ad1212"/>
<rect x="171.65" y="383.94" width="67.12" height="1.113" fill="#bd1212"/>
<rect x="171.65" y="385.00" width="67.12" height="1.113" fill="#d21212"/>
<rect x="171.65" y="386.06" width="67.12" height="1.113" fill="#b01212"/>
<rect x="171.65" y="387.12" width="67.12" height="1.113" fill="#a91212"/>
<rect x="171.65" y="388.19" width="67.12" height="1.113" fill="#a41212"/>
<rect x="171.65" y="389.25" width="67.12" height="1.113" fill="#a51212"/>
<rect x="171.65" y="390.31" width="67.12" height="1.113" fill="#b91212"/>
<rect x="171.65" y="391.38" width="67.12" height="1.113" fill="#cb1212"/>
<rect x="171.65" y="392.44" width="67.12" height="1.113" fill="#b91212"/>
<rect x="171.65" y="393.50" width="67.12" height="1.113" fill="#1f1212"/>
<rect x="171.65" y="394.56" width="67.12" height="1.113" fill="#291212"/>
<rect x="171.65" y="395.62" width="67.12" height="2.175" fill="#1a1212"/>
<rect x="171.65" y="397.75" width="67.12" height="2.175" fill="#201212"/>
<rect x="171.65" y="399.88" width="67.12" height="1.113" fill="#181212"/>
<rect x="171.65" y="400.94" width="67.12" height="1.113" fill="#171212"/>
<rect x="171.65" y="402.00" width="67.12" height="1.113" fill="#7d1212"/>
<rect x="171.65" y="403.06" width="67.12" height="1.113" fill="#7c1212"/>
<rect x="171.65" y="404.12" width="67.12" height="1.113" fill="#641212"/>
<rect x="171.65" y="405.19" width="67.12" height="1.113" fill="#751212"/>
<rect x="171.65" y="406.25" width="67.12" height="1.113" fill="#701212"/>
<rect x="171.65" y="407.31" width="67.12" height="1.113" fill="#801212"/>
<rect x="171.65" y="408.38" width="67.12" height="1.113" fill="#771212"/>
<rect x="171.65" y="409.44" width="67.12" height="1.113" fill="#781212"/>
<rect x="171.65" y="410.50" width="67.12" height="1.113" fill="#741212"/>
<rect x="171.65" y="411.56" width="67.12" height="1.113" fill="#8b1212"/>
<rect x="171.65" y="412.62" width="67.12" height="1.113" fill="#901212"/>
<rect x="171.65" y="413.69" width="67.12" height="1.113" fill="#741212"/>
<rect x="171.65" y="414.75" width="67.12" height="1.113" fill="#881212"/>
<rect x="171.65" y="415.81" width="67.12" height="1.113" fill="#6e1212"/>
<rect x="171.65" y="416.88" width="67.12" height="1.113" fill="#7c1212"/>
<rect x="171.65" y="417.94" width="67.12" height="1.113" fill="#871212"/>
<rect x="171.65" y="419.00" width="67.12" height="1.113" fill="#931212"/>
<rect x="171.65" y="420.06" width="67.12" height="1.113" fill="#751212"/>
<rect x="171.65" y="421.12" width="67.12" height="1.113" fill="#7a1212"/>
<rect x="171.65" y="422.19" width="67.12" height="1.113" fill="#7e1212"/>
<rect x="171.65" y="423.25" width="67.12" height="1.113" fill="#631212"/>
<rect x="171.65" y="424.31" width="67.12" height="1.113" fill="#7c1212"/>
<rect x="171.65" y="425.38" width="67.12" height="1.113" fill="#711212"/>
<rect x="171.65" y="426.44" width="67.12" height="1.113" fill="#821212"/>
<rect x="171.65" y="427.50" width="67.12" height="1.113" fill="#6a1212"/>
<rect x="171.65" y="428.56" width="67.12" height="1.113" fill="#5d1212"/>
<rect x="171.65" y="429.62" width="67.12" height="1.113" fill="#7d1212"/>
<rect x="171.65" y="430.69" width="67.12" height="1.113" fill="#811212"/>
<rect x="171.65" y="431.75" width="67.12" height="1.113" fill="#741212"/>
<rect x="171.65" y="432.81" width="67.12" height="1.113" fill="#8b1212"/>
<rect x="171.65" y="433.88" width="67.12" height="1.113" fill="#791212"/>
<rect x="171.65" y="434.94" width="67.12" height="1.113" fill="#741212"/>
<rect x="171.65" y="436.00" width="67.12" height="1.113" fill="#851212"/>
<rect x="171.65" y="437.06" width="67.12" height="1.113" fill="#641212"/>
<rect x="171.65" y="438.12" width="67.12" height="1.113" fill="#731212"/>
<rect x="171.65" y="439.19" width="67.12" height="1.113" fill="#7e1212"/>
<rect x="171.65" y="440.25" width="67.12" height="1.113" fill="#8c1212"/>
<rect x="171.65" y="441.31" width="67.12" height="1.113" fill="#7c1212"/>
<rect x="171.65" y="442.38" width="67.12" height="1.113" fill="#831212"/>
<rect x="171.65" y="443.44" width="67.12" height="1.113" fill="#741212"/>
<rect x="171.65" y="444.50" width="67.12" height="1.113" fill="#841212"/>
<rect x="171.65" y="445.56" width="67.12" height="1.113" fill="#9a1212"/>
<rect x="171.65" y="446.62" width="67.12" height="1.113" fill="#741212"/>
<rect x="171.65" y="447.69" width="67.12" height="1.113" fill="#a51212"/>
<rect x="171.65" y="448.75" width="67.12" height="1.113" fill="#751212"/>
<rect x="171.65" y="449.81" width="67.12" height="1.113" fill="#801212"/>
<rect x="171.65" y="450.88" width="67.12" height="1.113" fill="#831212"/>
<rect x="171.65" y="451.94" width="67.12" height="1.113" fill="#901212"/>
<rect x="238.48" y="198.00" width="67.12" height="1.113" fill="#ac1212"/>
<rect x="238.48" y="199.06" width="67.12" height="1.113" fill="#a81212"/>
<rect x="238.48" y="200.12" width="67.12" height="1.113" fill="#b61212"/>
<rect x="238.48" y="201.19" width="67.12" height="1.113" fill="#b71212"/>
<rect x="238.48" y="202.25" width="67.12" height="1.113" fill="#b61212"/>
<rect x="238.48" y="203.31" width="67.12" height="1.113" fill="#ca1212"/>
<rect x="238.48" y="204.38" width="67.12" height="2.175" fill="#b01212"/>
<rect x="238.48" y="206.50" width="67.12" height="1.113" fill="#b71212"/>
<rect x="238.48" y="207.56" width="67.12" height="1.113" fill="#b11212"/>
<rect x="238.48" y="208.62" width="67.12" height="1.113" fill="#bf1212"/>
<rect x="238.48" y="209.69" width="67.12" height="1.113" fill="#c21212"/>
<rect x="238.48" y="210.75" width="67.12" height="1.113" fill="#ce1212"/>
<rect x="238.48" y="211.81" width="67.12" height="1.113" fill="#a51212"/>
<rect x="238.48" y="212.88" width="67.12" height="1.113" fill="#de1212"/>
<rect x="238.48" y="213.94" width="67.12" height="1.113" fill="#ce1212"/>
<rect x="238.48" y="215.00" width="67.12" height="1.113" fill="#df1212"/>
<rect x="238.48" y="216.06" width="67.12" height="1.113" fill="#ee1412"/>
<rect x="238.48" y="217.12" width="67.12" height="1.113" fill="#d31212"/>
<rect x="238.48" y="218.19" width="67.12" height="1.113" fill="#cf1212"/>
<rect x="238.48" y="219.25" width="67.12" height="1.113" fill="#eb1212"/>
<rect x="238.48" y="220.31" width="67.12" height="1.113" fill="#e51212"/>
<rect x="238.48" y="221.38" width="67.12" height="1.113" fill="#e91212"/>
<rect x="238.48" y="222.44" width="67.12" height="1.113" fill="#ee2112"/>
<rect x="238.48" y="223.50" width="67.12" height="2.175" fill="#ee1812"/>
<rect x="238.48" y="225.62" width="67.12" height="1.113" fill="#ee4a12"/>
<rect x="238.48" y="226.69" width="67.12" height="1.113" fill="#ee5b12"/>
<rect x="238.48" y="227.75" width="67.12" height="1.113" fill="#ee5412"/>
<rect x="238.48" y="228.81" width="67.12" height="1.113" fill="#ee4a12"/>
<rect x="238.48" y="229.88" width="67.12" height="1.113" fill="#ee5712"/>
<rect x="238.48" y="230.94" width="67.12" height="1.113" fill="#ee4a12"/>
<rect x="238.48" y="232.00" width="67.12" height="1.113" fill="#ee7a12"/>
<rect x="238.48" y="233.06" width="67.12" height="1.113" fill="#eea412"/>
<rect x="238.48" y="234.12" width="67.12" height="1.113" fill="#ee9412"/>
<rect x="238.48" y="235.19" width="67.12" height="1.113" fill="#ee7d12"/>
<rect x="238.48" y="236.25" width="67.12" height="1.113" fill="#ee9e12"/>
<rect x="238.48" y="237.31" width="67.12" height="1.113" fill="#ee9212"/>
<rect x="238.48" y="238.38" width="67.12" height="1.113" fill="#ee9912"/>
<rect x="238.48" y="239.44" width="67.12" height="1.113" fill="#f4ce12"/>
<rect x="238.48" y="240.50" width="67.12" height="1.113" fill="#f0b812"/>
<rect x="238.48" y="241.56" width="67.12" height="1.113" fill="#f2c212"/>
<rect x="238.48" y="242.62" width="67.12" height="1.113" fill="#f0b612"/>
<rect x="238.48" y="243.69" width="67.12" height="1.113" fill="#efb012"/>
<rect x="238.48" y="244.75" width="67.12" height="1.113" fill="#ee9912"/>
<rect x="238.48" y="245.81" width="67.12" height="1.113" fill="#f2c312"/>
<rect x="238.48" y="246.88" width="67.12" height="1.113" fill="#f8e112"/>
<rect x="238.48" y="247.94" width="67.12" height="1.113" fill="#f7dd12"/>
<rect x="238.48" y="249.00" width="67.12" height="1.113" fill="#f9e512"/>
<rect x="238.48" y="250.06" width="67.12" height="1.113" fill="#f8e112"/>
<rect x="238.48" y="251.12" width="67.12" height="1.113" fill="#f9e812"/>
<rect x="238.48" y="252.19" width="67.12" height="1.113" fill="#fdfd12"/>
<rect x="238.48" y="253.25" width="67.12" height="1.113" fill="#feff19"/>
<rect x="238.48" y="254.31" width="67.12" height="1.113" fill="#f7de12"/>
<rect x="238.48" y="255.38" width="67.12" height="1.113" fill="#fdfc12"/>
<rect x="238.48" y="256.44" width="67.12" height="1.113" fill="#ffff2b"/>
<rect x="238.48" y="257.50" width="67.12" height="1.113" fill="#ffff3b"/>
<rect x="238.48" y="258.56" width="67.12" height="1.113" fill="#fdfd12"/>
<rect x="238.48" y="259.62" width="67.12" height="1.113" fill="#feff17"/>
<rect x="238.48" y="260.69" width="67.12" height="1.113" fill="#ffff41"/>
<rect x="238.48" y="261.75" width="67.12" height="1.113" fill="#ffff4c"/>
<rect x="238.48" y="262.81" width="67.12" height="1.113" fill="#ffff80"/>
<rect x="238.48" y="263.88" width="67.12" height="1.113" fill="#ffffaf"/>
<rect x="238.48" y="264.94" width="67.12" height="1.113" fill="#ffff5e"/>
<rect x="238.48" y="266.00" width="67.12" height="1.113" fill="#ffff99"/>
<rect x="238.48" y="267.06" width="67.12" height="1.113" fill="#ffff39"/>
<rect x="238.48" y="268.12" width="67.12" height="1.113" fill="#ffff66"/>
<rect x="238.48" y="269.19" width="67.12" height="1.113" fill="#ffff58"/>
<rect x="238.48" y="270.25" width="67.12" height="1.113" fill="#ffff62"/>
<rect x="238.48" y="271.31" width="67.12" height="1.113" fill="#ffff94"/>
<rect x="238.48" y="272.38" width="67.12" height="1.113" fill="#ffffd3"/>
<rect x="238.48" y="273.44" width="67.12" height="1.113" fill="#ffff3b"/>
<rect x="238.48" y="274.50" width="67.12" height="1.113" fill="#ffff3f"/>
<rect x="238.48" y="275.56" width="67.12" height="1.113" fill="#ffff75"/>
<rect x="238.48" y="276.62" width="67.12" height="1.113" fill="#ffff28"/>
<rect x="238.48" y="277.69" width="67.12" height="1.113" fill="#ffff75"/>
<rect x="238.48" y="278.75" width="67.12" height="1.113" fill="#ffff78"/>
<rect x="238.48" y="279.81" width="67.12" height="1.113" fill="#ffff4e"/>
<rect x="238.48" y="280.88" width="67.12" height="1.113" fill="#ffff76"/>
<rect x="238.48" y="281.94" width="67.12" height="1.113" fill="#fdfc12"/>
<rect x="238.48" y="283.00" width="67.12" height="1.113" fill="#ffff82"/>
<rect x="238.48" y="284.06" width="67.12" height="1.113" fill="#fdfc12"/>
<rect x="238.48" y="285.12" width="67.12" height="1.113" fill="#ffff39"/>
<rect x="238.48" y="286.19" width="67.12" height="1.113" fill="#ffff40"/>
<rect x="238.48" y="287.25" width="67.12" height="1.113" fill="#ffff48"/>
<rect x="238.48" y="288.31" width="67.12" height="1.113" fill="#ffff87"/>
<rect x="238.48" y="289.38" width="67.12" height="1.113" fill="#ffff60"/>
<rect x="238.48" y="290.44" width="67.12" height="1.113" fill="#ffffb0"/>
<rect x="238.48" y="291.50" width="67.12" height="1.113" fill="#ffffc0"/>
<rect x="238.48" y="292.56" width="67.12" height="1.113" fill="#ffffa2"/>
<rect x="238.48" y="293.62" width="67.12" height="1.113" fill="#ffff54"/>
<rect x="238.48" y="294.69" width="67.12" height="1.113" fill="#ffff66"/>
<rect x="238.48" y="295.75" width="67.12" height="1.113" fill="#ffff91"/>
<rect x="238.48" y="296.81" width="67.12" height="1.113" fill="#ffff61"/>
<rect x="238.48" y="297.88" width="67.12" height="1.113" fill="#fefe14"/>
<rect x="238.48" y="298.94" width="67.12" height="1.113" fill="#ffffcf"/>
<rect x="238.48" y="300.00" width="67.12" height="1.113" fill="#ffffc1"/>
<rect x="238.48" y="301.06" width="67.12" height="1.113" fill="#f9e712"/>
<rect x="238.48" y="302.12" width="67.12" height="1.113" fill="#ffff52"/>
<rect x="238.48" y="303.19" width="67.12" height="1.113" fill="#ffff68"/>
<rect x="238.48" y="304.25" width="67.12" height="1.113" fill="#ffff84"/>
<rect x="238.48" y="305.31" width="67.12" height="1.113" fill="#ffff75"/>
<rect x="238.48" y="306.38" width="67.12" height="1.113" fill="#ffff46"/>
<rect x="238.48" y="307.44" width="67.12" height="1.113" fill="#ffff1f"/>
<rect x="238.48" y="308.50" width="67.12" height="1.113" fill="#ffff59"/>
<rect x="238.48" y="309.56" width="67.12" height="1.113" fill="#ffff87"/>
<rect x="238.48" y="310.62" width="67.12" height="1.113" fill="#ffff1e"/>
<rect x="238.48" y="311.69" width="67.12" height="1.113" fill="#ffff21"/>
<rect x="238.48" y="312.75" width="67.12" height="1.113" fill="#ffff53"/>
<rect x="238.48" y="313.81" width="67.12" height="1.113" fill="#f9e912"/>
<rect x="238.48" y="314.88" width="67.12" height="1.113" fill="#ffff47"/>
<rect x="238.48" y="315.94" width="67.12" height="1.113" fill="#ffff3e"/>
<rect x="238.48" y="317.00" width="67.12" height="1.113" fill="#ffff6a"/>
<rect x="238.48" y="318.06" width="67.12" height="1.113" fill="#ffff31"/>
<rect x="238.48" y="319.12" width="67.12" height="1.113" fill="#ffff28"/>
<rect x="238.48" y="320.19" width="67.12" height="1.113" fill="#ffff40"/>
<rect x="238.48" y="321.25" width="67.12" height="1.113" fill="#ffff51"/>
<rect x="238.48" y="322.31" width="67.12" height="1.113" fill="#ffff59"/>
<rect x="238.48" y="323.38" width="67.12" height="1.113" fill="#ffff64"/>
<rect x="238.48" y="324.44" width="67.12" height="1.113" fill="#ffff71"/>
<rect x="238.48" y="325.50" width="67.12" height="1.113" fill="#ffff78"/>
<rect x="238.48" y="326.56" width="67.12" height="1.113" fill="#ffff36"/>
<rect x="238.48" y="327.62" width="67.12" height="1.113" fill="#fdfb12"/>
<rect x="238.48" y="328.69" width="67.12" height="1.113" fill="#fdfe13"/>
<rect x="238.48" y="329.75" width="67.12" height="1.113" fill="#f9e712"/>
<rect x="238.48" y="330.81" width="67.12" height="1.113" fill="#ffff39"/>
<rect x="238.48" y="331.88" width="67.12" height="1.113" fill="#fdfb12"/>
<rect x="238.48" y="332.94" width="67.12" height="1.113" fill="#f5d312"/>
<rect x="238.48" y="334.00" width="67.12" height="1.113" fill="#f7db12"/>
<rect x="238.48" y="335.06" width="67.12" height="1.113" fill="#f1b912"/>
<rect x="238.48" y="336.12" width="67.12" height="1.113" fill="#f6d712"/>
<rect x="238.48" y="337.19" width="67.12" height="1.113" fill="#f4cd12"/>
<rect x="238.48" y="338.25" width="67.12" height="1.113" fill="#eead12"/>
<rect x="238.48" y="339.31" width="67.12" height="1.113" fill="#f5d012"/>
<rect x="238.48" y="340.38" width="67.12" height="1.113" fill="#f7de12"/>
<rect x="238.48" y="341.44" width="67.12" height="1.113" fill="#eea812"/>
<rect x="238.48" y="342.50" width="67.12" height="1.113" fill="#f6d412"/>
<rect x="238.48" y="343.56" width="67.12" height="1.113" fill="#f3c812"/>
<rect x="238.48" y="344.62" width="67.12" height="2.175" fill="#ee9812"/>
<rect x="238.48" y="346.75" width="67.12" height="1.113" fill="#eea312"/>
<rect x="238.48" y="347.81" width="67.12" height="1.113" fill="#ee8f12"/>
<rect x="238.48" y="348.88" width="67.12" height="1.113" fill="#ee9e12"/>
<rect x="238.48" y="349.94" width="67.12" height="1.113" fill="#ee8d12"/>
<rect x="238.48" y="351.00" width="67.12" height="1.113" fill="#ee9c12"/>
<rect x="238.48" y="352.06" width="67.12" height="1.113" fill="#ee6c12"/>
<rect x="238.48" y="353.12" width="67.12" height="1.113" fill="#ee7612"/>
<rect x="238.48" y="354.19" width="67.12" height="1.113" fill="#ee8e12"/>
<rect x="238.48" y="355.25" width="67.12" height="1.113" fill="#ee7d12"/>
<rect x="238.48" y="356.31" width="67.12" height="1.113" fill="#ee7512"/>
<rect x="238.48" y="357.38" width="67.12" height="1.113" fill="#ee6812"/>
<rect x="238.48" y="358.44" width="67.12" height="1.113" fill="#ee4712"/>
<rect x="238.48" y="359.50" width="67.12" height="1.113" fill="#ee5412"/>
<rect x="238.48" y="360.56" width="67.12" height="1.113" fill="#ee5e12"/>
<rect x="238.48" y="361.62" width="67.12" height="1.113" fill="#ee5712"/>
<rect x="238.48" y="362.69" width="67.12" height="1.113" fill="#ee5912"/>
<rect x="238.48" y="363.75" width="67.12" height="1.113" fill="#ee3112"/>
<rect x="238.48" y="364.81" width="67.12" height="1.113" fill="#ee4012"/>
<rect x="238.48" y="365.88" width="67.12" height="1.113" fill="#ee2d12"/>
<rect x="238.48" y="366.94" width="67.12" height="1.113" fill="#ee2c12"/>
<rect x="238.48" y="368.00" width="67.12" height="1.113" fill="#ee3b12"/>
<rect x="238.48" y="369.06" width="67.12" height="1.113" fill="#e41212"/>
<rect x="238.48" y="370.12" width="67.12" height="1.113" fill="#df1212"/>
<rect x="238.48" y="371.19" width="67.12" height="1.113" fill="#db1212"/>
<rect x="238.48" y="372.25" width="67.12" height="1.113" fill="#df1212"/>
<rect x="238.48" y="373.31" width="67.12" height="1.113" fill="#eb1212"/>
<rect x="238.48" y="374.38" width="67.12" height="1.113" fill="#e81212"/>
<rect x="238.48" y="375.44" width="67.12" height="1.113" fill="#d31212"/>
<rect x="238.48" y="376.50" width="67.12" height="1.113" fill="#e91212"/>
<rect x="238.48" y="377.56" width="67.12" height="1.113" fill="#e51212"/>
<rect x="238.48" y="378.62" width="67.12" height="2.175" fill="#d61212"/>
<rect x="238.48" y="380.75" width="67.12" height="1.113" fill="#cb1212"/>
<rect x="238.48" y="381.81" width="67.12" height="1.113" fill="#ca1212"/>
<rect x="238.48" y="382.88" width="67.12" height="1.113" fill="#d61212"/>
<rect x="238.48" y="383.94" width="67.12" height="1.113" fill="#dc1212"/>
<rect x="238.48" y="385.00" width="67.12" height="1.113" fill="#c61212"/>
<rect x="238.48" y="386.06" width="67.12" height="1.113" fill="#c81212"/>
<rect x="238.48" y="387.12" width="67.12" height="1.113" fill="#b91212"/>
<rect x="238.48" y="388.19" width="67.12" height="1.113" fill="#dc1212"/>
<rect x="238.48" y="389.25" width="67.12" height="1.113" fill="#be1212"/>
<rect x="238.48" y="390.31" width="67.12" height="1.113" fill="#d01212"/>
<rect x="238.48" y="391.38" width="67.12" height="1.113" fill="#bc1212"/>
<rect x="238.48" y="392.44" width="67.12" height="1.113" fill="#cb1212"/>
<rect x="238.48" y="393.50" width="67.12" height="1.113" fill="#981212"/>
<rect x="238.48" y="394.56" width="67.12" height="1.113" fill="#591212"/>
<rect x="238.48" y="395.62" width="67.12" height="1.113" fill="#751212"/>
<rect x="238.48" y="396.69" width="67.12" height="1.113" fill="#811212"/>
<rect x="238.48" y="397.75" width="67.12" height="1.113" fill="#791212"/>
<rect x="238.48" y="398.81" width="67.12" height="1.113" fill="#721212"/>
<rect x="238.48" y="399.88" width="67.12" height="1.113" fill="#971212"/>
<rect x="238.48" y="400.94" width="67.12" height="1.113" fill="#7c1212"/>
<rect x="238.48" y="402.00" width="67.12" height="1.113" fill="#651212"/>
<rect x="238.48" y="403.06" width="67.12" height="1.113" fill="#861212"/>
<rect x="238.48" y="404.12" width="67.12" height="1.113" fill="#641212"/>
<rect x="238.48" y="405.19" width="67.12" height="1.113" fill="#771212"/>
<rect x="238.48" y="406.25" width="67.12" height="1.113" fill="#651212"/>
<rect x="238.48" y="407.31" width="67.12" height="1.113" fill="#6c1212"/>
<rect x="238.48" y="408.38" width="67.12" height="1.113" fill="#781212"/>
<rect x="238.48" y="409.44" width="67.12" height="1.113" fill="#6c1212"/>
<rect x="238.48" y="410.50" width="67.12" height="1.113" fill="#5c1212"/>
<rect x="238.48" y="411.56" width="67.12" height="1.113" fill="#591212"/>
<rect x="238.48" y="412.62" width="67.12" height="1.113" fill="#771212"/>
<rect x="238.48" y="413.69" width="67.12" height="1.113" fill="#731212"/>
<rect x="238.48" y="414.75" width="67.12" height="1.113" fill="#701212"/>
<rect x="238.48" y="415.81" width="67.12" height="1.113" fill="#861212"/>
<rect x="238.48" y="416.88" width="67.12" height="1.113" fill="#811212"/>
<rect x="238.48" y="417.94" width="67.12" height="1.113" fill="#831212"/>
<rect x="238.48" y="419.00" width="67.12" height="1.113" fill="#5d1212"/>
<rect x="238.48" y="420.06" width="67.12" height="1.113" fill="#771212"/>
<rect x="238.48" y="421.12" width="67.12" height="1.113" fill="#871212"/>
<rect x="238.48" y="422.19" width="67.12" height="1.113" fill="#851212"/>
<rect x="238.48" y="423.25" width="67.12" height="1.113" fill="#861212"/>
<rect x="238.48" y="424.31" width="67.12" height="1.113" fill="#5a1212"/>
<rect x="238.48" y="425.38" width="67.12" height="1.113" fill="#7d1212"/>
<rect x="238.48" y="426.44" width="67.12" height="1.113" fill="#811212"/>
<rect x="238.48" y="427.50" width="67.12" height="1.113" fill="#9d1212"/>
<rect x="238.48" y="428.56" width="67.12" height="1.113" fill="#6e1212"/>
<rect x="238.48" y="429.62" width="67.12" height="1.113" fill="#761212"/>
<rect x="238.48" y="430.69" width="67.12" height="1.113" fill="#7b1212"/>
<rect x="238.48" y="431.75" width="67.12" height="1.113" fill="#871212"/>
<rect x="238.48" y="432.81" width="67.12" height="1.113" fill="#751212"/>
<rect x="238.48" y="433.88" width="67.12" height="1.113" fill="#8a1212"/>
<rect x="238.48" y="434.94" width="67.12" height="1.113" fill="#701212"/>
<rect x="238.48" y="436.00" width="67.12" height="1.113" fill="#7e1212"/>
<rect x="238.48" y="437.06" width="67.12" height="1.113" fill="#741212"/>
<rect x="238.48" y="438.12" width="67.12" height="1.113" fill="#7d1212"/>
<rect x="238.48" y="439.19" width="67.12" height="1.113" fill="#711212"/>
<rect x="238.48" y="440.25" width="67.12" height="1.113" fill="#651212"/>
<rect x="238.48" y="441.31" width="67.12" height="1.113" fill="#891212"/>
<rect x="238.48" y="442.38" width="67.12" height="1.113" fill="#7f1212"/>
<rect x="238.48" y="443.44" width="67.12" height="1.113" fill="#731212"/>
<rect x="238.48" y="444.50" width="67.12" height="1.113" fill="#7d1212"/>
<rect x="238.48" y="445.56" width="67.12" height="1.113" fill="#881212"/>
<rect x="238.48" y="446.62" width="67.12" height="1.113" fill="#6e1212"/>
<rect x="238.48" y="447.69" width="67.12" height="1.113" fill="#791212"/>
<rect x="238.48" y="448.75" width="67.12" height="2.175" fill="#821212"/>
<rect x="238.48" y="450.88" width="67.12" height="1.113" fill="#761212"/>
<rect x="238.48" y="451.94" width="67.12" height="1.113" fill="#5f1212"/>
</g>
<line x1="104.83" y1="198.00" x2="104.83" y2="453.00" stroke="#808080" stroke-opacity="0.3" stroke-width="0.7"/>
<line x1="171.65" y1="198.00" x2="171.65" y2="453.00" stroke="#808080" stroke-opacity="0.3" stroke-width="0.7"/>
<line x1="238.48" y1="198.00" x2="238.48" y2="453.00" stroke="#808080" stroke-opacity="0.3" stroke-width="0.7"/>
<rect x="38.00" y="198.00" width="267.30" height="255.00" fill="none" stroke="#000" stroke-width="0.8"/>
<line x1="35.70" y1="452.47" x2="38.00" y2="452.47" stroke="#000" stroke-width="0.7"/>
<text x="33.20" y="455.87" font-family="Liberation Sans, sans-serif" font-size="8.3" text-anchor="end" fill="#262626">0</text>
<line x1="35.70" y1="399.34" x2="38.00" y2="399.34" stroke="#000" stroke-width="0.7"/>
<text x="33.20" y="402.74" font-family="Liberation Sans, sans-serif" font-size="8.3" text-anchor="end" fill="#262626">50</text>
<line x1="35.70" y1="346.22" x2="38.00" y2="346.22" stroke="#000" stroke-width="0.7"/>
<text x="33.20" y="349.62" font-family="Liberation Sans, sans-serif" font-size="8.3" text-anchor="end" fill="#262626">100</text>
<line x1="35.70" y1="293.09" x2="38.00" y2="293.09" stroke="#000" stroke-width="0.7"/>
<text x="33.20" y="296.49" font-family="Liberation Sans, sans-serif" font-size="8.3" text-anchor="end" fill="#262626">150</text>
<line x1="35.70" y1="239.97" x2="38.00" y2="239.97" stroke="#000" stroke-width="0.7"/>
<text x="33.20" y="243.37" font-family="Liberation Sans, sans-serif" font-size="8.3" text-anchor="end" fill="#262626">200</text>
<line x1="71.41" y1="453.00" x2="71.41" y2="455.30" stroke="#000" stroke-width="0.7"/>
<text x="71.41" y="463.30" font-family="Liberation Sans, sans-serif" font-size="6.8" text-anchor="middle" fill="#262626">Sym 0</text>
<text x="71.41" y="470.00" font-family="Liberation Sans, sans-serif" font-size="6.8" text-anchor="middle" fill="#262626">(PSS)</text>
<line x1="138.24" y1="453.00" x2="138.24" y2="455.30" stroke="#000" stroke-width="0.7"/>
<text x="138.24" y="463.30" font-family="Liberation Sans, sans-serif" font-size="6.8" text-anchor="middle" fill="#262626">Sym 1</text>
<text x="138.24" y="470.00" font-family="Liberation Sans, sans-serif" font-size="6.8" text-anchor="middle" fill="#262626">(PBCH)</text>
<line x1="205.06" y1="453.00" x2="205.06" y2="455.30" stroke="#000" stroke-width="0.7"/>
<text x="205.06" y="463.30" font-family="Liberation Sans, sans-serif" font-size="6.8" text-anchor="middle" fill="#262626">Sym 2</text>
<text x="205.06" y="470.00" font-family="Liberation Sans, sans-serif" font-size="6.8" text-anchor="middle" fill="#262626">(SSS)</text>
<line x1="271.89" y1="453.00" x2="271.89" y2="455.30" stroke="#000" stroke-width="0.7"/>
<text x="271.89" y="463.30" font-family="Liberation Sans, sans-serif" font-size="6.8" text-anchor="middle" fill="#262626">Sym 3</text>
<text x="271.89" y="470.00" font-family="Liberation Sans, sans-serif" font-size="6.8" text-anchor="middle" fill="#262626">(PBCH)</text>
<text transform="translate(13.2,325.5) rotate(-90)" font-family="Liberation Sans, sans-serif" font-size="7.57" text-anchor="middle" fill="#262626">Subcarrier Index (within SSB)</text>
<text x="171.2" y="194.0" font-family="Liberation Sans, sans-serif" font-size="8.2" text-anchor="middle" fill="#262626">Detected SSB Resource Grid (Raw, Unequalized)</text>
<defs><linearGradient id="hotg" x1="0" y1="1" x2="0" y2="0">
<stop offset="0.000" stop-color="#000000"/>
<stop offset="0.025" stop-color="#110000"/>
<stop offset="0.050" stop-color="#230000"/>
<stop offset="0.075" stop-color="#340000"/>
<stop offset="0.100" stop-color="#460000"/>
<stop offset="0.125" stop-color="#570000"/>
<stop offset="0.150" stop-color="#690000"/>
<stop offset="0.175" stop-color="#7a0000"/>
<stop offset="0.200" stop-color="#8c0000"/>
<stop offset="0.225" stop-color="#9d0000"/>
<stop offset="0.250" stop-color="#af0000"/>
<stop offset="0.275" stop-color="#c00000"/>
<stop offset="0.300" stop-color="#d20000"/>
<stop offset="0.325" stop-color="#e30000"/>
<stop offset="0.350" stop-color="#f40000"/>
<stop offset="0.375" stop-color="#ff0700"/>
<stop offset="0.400" stop-color="#ff1700"/>
<stop offset="0.425" stop-color="#ff2800"/>
<stop offset="0.450" stop-color="#ff3900"/>
<stop offset="0.475" stop-color="#ff4a00"/>
<stop offset="0.500" stop-color="#ff5a00"/>
<stop offset="0.525" stop-color="#ff6b00"/>
<stop offset="0.550" stop-color="#ff7c00"/>
<stop offset="0.575" stop-color="#ff8d00"/>
<stop offset="0.600" stop-color="#ff9d00"/>
<stop offset="0.625" stop-color="#ffae00"/>
<stop offset="0.650" stop-color="#ffbf00"/>
<stop offset="0.675" stop-color="#ffcf00"/>
<stop offset="0.700" stop-color="#ffe000"/>
<stop offset="0.725" stop-color="#fff100"/>
<stop offset="0.750" stop-color="#ffff04"/>
<stop offset="0.775" stop-color="#ffff1d"/>
<stop offset="0.800" stop-color="#ffff36"/>
<stop offset="0.825" stop-color="#ffff4f"/>
<stop offset="0.850" stop-color="#ffff68"/>
<stop offset="0.875" stop-color="#ffff81"/>
<stop offset="0.900" stop-color="#ffff9b"/>
<stop offset="0.925" stop-color="#ffffb4"/>
<stop offset="0.950" stop-color="#ffffcd"/>
<stop offset="0.975" stop-color="#ffffe6"/>
<stop offset="1.000" stop-color="#ffffff"/>
</linearGradient></defs>
<rect x="321.20" y="198.00" width="13.30" height="255.00" fill="url(#hotg)" stroke="#000" stroke-width="0.8"/>
<line x1="334.50" y1="409.80" x2="336.80" y2="409.80" stroke="#000" stroke-width="0.7"/>
<text x="339.70" y="412.70" font-family="Liberation Sans, sans-serif" font-size="8.3" fill="#262626">2</text>
<line x1="334.50" y1="364.60" x2="336.80" y2="364.60" stroke="#000" stroke-width="0.7"/>
<text x="339.70" y="367.50" font-family="Liberation Sans, sans-serif" font-size="8.3" fill="#262626">4</text>
<line x1="334.50" y1="319.40" x2="336.80" y2="319.40" stroke="#000" stroke-width="0.7"/>
<text x="339.70" y="322.30" font-family="Liberation Sans, sans-serif" font-size="8.3" fill="#262626">6</text>
<line x1="334.50" y1="274.20" x2="336.80" y2="274.20" stroke="#000" stroke-width="0.7"/>
<text x="339.70" y="277.10" font-family="Liberation Sans, sans-serif" font-size="8.3" fill="#262626">8</text>
<line x1="334.50" y1="229.00" x2="336.80" y2="229.00" stroke="#000" stroke-width="0.7"/>
<text x="339.70" y="231.90" font-family="Liberation Sans, sans-serif" font-size="8.3" fill="#262626">10</text>
<text transform="translate(357.6,325.8) rotate(-90)" font-family="Liberation Sans, sans-serif" font-size="8.5" text-anchor="middle" fill="#262626">Magnitude</text>
<line x1="478.94" y1="198.00" x2="478.94" y2="453.50" stroke="#eeeeee" stroke-width="1"/>
<line x1="447.00" y1="421.56" x2="702.50" y2="421.56" stroke="#eeeeee" stroke-width="1"/>
<line x1="510.88" y1="198.00" x2="510.88" y2="453.50" stroke="#eeeeee" stroke-width="1"/>
<line x1="447.00" y1="389.62" x2="702.50" y2="389.62" stroke="#eeeeee" stroke-width="1"/>
<line x1="542.81" y1="198.00" x2="542.81" y2="453.50" stroke="#eeeeee" stroke-width="1"/>
<line x1="447.00" y1="357.69" x2="702.50" y2="357.69" stroke="#eeeeee" stroke-width="1"/>
<line x1="606.69" y1="198.00" x2="606.69" y2="453.50" stroke="#eeeeee" stroke-width="1"/>
<line x1="447.00" y1="293.81" x2="702.50" y2="293.81" stroke="#eeeeee" stroke-width="1"/>
<line x1="638.62" y1="198.00" x2="638.62" y2="453.50" stroke="#eeeeee" stroke-width="1"/>
<line x1="447.00" y1="261.88" x2="702.50" y2="261.88" stroke="#eeeeee" stroke-width="1"/>
<line x1="670.56" y1="198.00" x2="670.56" y2="453.50" stroke="#eeeeee" stroke-width="1"/>
<line x1="447.00" y1="229.94" x2="702.50" y2="229.94" stroke="#eeeeee" stroke-width="1"/>
<defs><clipPath id="axclip"><rect x="447.00" y="198.00" width="255.50" height="255.50"/></clipPath></defs>
<g clip-path="url(#axclip)">
<circle cx="651.5" cy="255.4" r="1.25" fill="#ff0000" fill-opacity="0.72"/>
<circle cx="654.9" cy="258.4" r="1.25" fill="#ff0000" fill-opacity="0.72"/>
<circle cx="656.9" cy="257.4" r="1.25" fill="#ff0000" fill-opacity="0.72"/>
<circle cx="664.0" cy="255.0" r="1.25" fill="#ff0000" fill-opacity="0.72"/>
<circle cx="665.7" cy="258.1" r="1.25" fill="#ff0000" fill-opacity="0.72"/>
<circle cx="667.1" cy="259.5" r="1.25" fill="#ff0000" fill-opacity="0.72"/>
<circle cx="670.4" cy="260.8" r="1.25" fill="#ff0000" fill-opacity="0.72"/>
<circle cx="663.0" cy="261.1" r="1.25" fill="#ff0000" fill-opacity="0.72"/>
<circle cx="677.2" cy="260.0" r="1.25" fill="#ff0000" fill-opacity="0.72"/>
<circle cx="685.7" cy="259.2" r="1.25" fill="#ff0000" fill-opacity="0.72"/>
<circle cx="679.2" cy="263.5" r="1.25" fill="#ff0000" fill-opacity="0.72"/>
<circle cx="684.3" cy="262.8" r="1.25" fill="#ff0000" fill-opacity="0.72"/>
<circle cx="591.6" cy="303.9" r="1.25" fill="#ff0000" fill-opacity="0.72"/>
<circle cx="593.3" cy="304.6" r="1.25" fill="#ff0000" fill-opacity="0.72"/>
<circle cx="599.0" cy="299.2" r="1.25" fill="#ff0000" fill-opacity="0.72"/>
<circle cx="604.4" cy="297.8" r="1.25" fill="#ff0000" fill-opacity="0.72"/>
<circle cx="601.4" cy="295.8" r="1.25" fill="#ff0000" fill-opacity="0.72"/>
<circle cx="609.1" cy="296.5" r="1.25" fill="#ff0000" fill-opacity="0.72"/>
<circle cx="611.8" cy="298.5" r="1.25" fill="#ff0000" fill-opacity="0.72"/>
<circle cx="615.5" cy="300.8" r="1.25" fill="#ff0000" fill-opacity="0.72"/>
<circle cx="606.4" cy="304.8" r="1.25" fill="#ff0000" fill-opacity="0.72"/>
<circle cx="622.0" cy="292.4" r="1.25" fill="#ff0000" fill-opacity="0.72"/>
<circle cx="623.0" cy="293.8" r="1.25" fill="#ff0000" fill-opacity="0.72"/>
<circle cx="627.6" cy="292.0" r="1.25" fill="#ff0000" fill-opacity="0.72"/>
<circle cx="630.1" cy="300.2" r="1.25" fill="#ff0000" fill-opacity="0.72"/>
<circle cx="633.0" cy="291.5" r="1.25" fill="#ff0000" fill-opacity="0.72"/>
<circle cx="635.7" cy="294.8" r="1.25" fill="#ff0000" fill-opacity="0.72"/>
<circle cx="637.1" cy="289.4" r="1.25" fill="#ff0000" fill-opacity="0.72"/>
<circle cx="638.8" cy="284.3" r="1.25" fill="#ff0000" fill-opacity="0.72"/>
<circle cx="667.3" cy="263.8" r="1.25" fill="#ff0000" fill-opacity="0.72"/>
<circle cx="668.4" cy="266.8" r="1.25" fill="#ff0000" fill-opacity="0.72"/>
<circle cx="665.0" cy="268.1" r="1.25" fill="#ff0000" fill-opacity="0.72"/>
<circle cx="668.4" cy="269.7" r="1.25" fill="#ff0000" fill-opacity="0.72"/>
<circle cx="670.8" cy="271.9" r="1.25" fill="#ff0000" fill-opacity="0.72"/>
<circle cx="672.2" cy="274.6" r="1.25" fill="#ff0000" fill-opacity="0.72"/>
<circle cx="676.5" cy="275.1" r="1.25" fill="#ff0000" fill-opacity="0.72"/>
<circle cx="677.9" cy="265.1" r="1.25" fill="#ff0000" fill-opacity="0.72"/>
<circle cx="681.9" cy="266.8" r="1.25" fill="#ff0000" fill-opacity="0.72"/>
<circle cx="679.2" cy="268.1" r="1.25" fill="#ff0000" fill-opacity="0.72"/>
<circle cx="685.7" cy="264.7" r="1.25" fill="#ff0000" fill-opacity="0.72"/>
<circle cx="687.0" cy="265.1" r="1.25" fill="#ff0000" fill-opacity="0.72"/>
<circle cx="688.4" cy="268.8" r="1.25" fill="#ff0000" fill-opacity="0.72"/>
<circle cx="653.6" cy="276.9" r="1.25" fill="#ff0000" fill-opacity="0.72"/>
<circle cx="663.0" cy="277.3" r="1.25" fill="#ff0000" fill-opacity="0.72"/>
<circle cx="663.7" cy="280.0" r="1.25" fill="#ff0000" fill-opacity="0.72"/>
<circle cx="669.1" cy="283.2" r="1.25" fill="#ff0000" fill-opacity="0.72"/>
<circle cx="651.1" cy="282.0" r="1.25" fill="#ff0000" fill-opacity="0.72"/>
<circle cx="645.5" cy="281.6" r="1.25" fill="#ff0000" fill-opacity="0.72"/>
<circle cx="656.3" cy="283.0" r="1.25" fill="#ff0000" fill-opacity="0.72"/>
<circle cx="657.9" cy="282.0" r="1.25" fill="#ff0000" fill-opacity="0.72"/>
<circle cx="655.6" cy="285.4" r="1.25" fill="#ff0000" fill-opacity="0.72"/>
<circle cx="646.8" cy="288.1" r="1.25" fill="#ff0000" fill-opacity="0.72"/>
<circle cx="653.8" cy="289.0" r="1.25" fill="#ff0000" fill-opacity="0.72"/>
<circle cx="469.4" cy="364.9" r="1.25" fill="#ff0000" fill-opacity="0.72"/>
<circle cx="474.0" cy="363.4" r="1.25" fill="#ff0000" fill-opacity="0.72"/>
<circle cx="476.7" cy="365.2" r="1.25" fill="#ff0000" fill-opacity="0.72"/>
<circle cx="471.0" cy="367.2" r="1.25" fill="#ff0000" fill-opacity="0.72"/>
<circle cx="478.8" cy="368.3" r="1.25" fill="#ff0000" fill-opacity="0.72"/>
<circle cx="481.8" cy="367.9" r="1.25" fill="#ff0000" fill-opacity="0.72"/>
<circle cx="487.2" cy="366.1" r="1.25" fill="#ff0000" fill-opacity="0.72"/>
<circle cx="486.1" cy="369.5" r="1.25" fill="#ff0000" fill-opacity="0.72"/>
<circle cx="491.5" cy="364.1" r="1.25" fill="#ff0000" fill-opacity="0.72"/>
<circle cx="493.3" cy="364.1" r="1.25" fill="#ff0000" fill-opacity="0.72"/>
<circle cx="496.0" cy="362.5" r="1.25" fill="#ff0000" fill-opacity="0.72"/>
<circle cx="494.2" cy="369.9" r="1.25" fill="#ff0000" fill-opacity="0.72"/>
<circle cx="506.1" cy="358.2" r="1.25" fill="#ff0000" fill-opacity="0.72"/>
<circle cx="505.8" cy="370.6" r="1.25" fill="#ff0000" fill-opacity="0.72"/>
<circle cx="512.2" cy="363.4" r="1.25" fill="#ff0000" fill-opacity="0.72"/>
<circle cx="473.0" cy="369.9" r="1.25" fill="#ff0000" fill-opacity="0.72"/>
<circle cx="472.4" cy="371.3" r="1.25" fill="#ff0000" fill-opacity="0.72"/>
<circle cx="471.0" cy="371.9" r="1.25" fill="#ff0000" fill-opacity="0.72"/>
<circle cx="469.7" cy="372.9" r="1.25" fill="#ff0000" fill-opacity="0.72"/>
<circle cx="468.3" cy="375.3" r="1.25" fill="#ff0000" fill-opacity="0.72"/>
<circle cx="467.2" cy="374.0" r="1.25" fill="#ff0000" fill-opacity="0.72"/>
<circle cx="464.3" cy="374.6" r="1.25" fill="#ff0000" fill-opacity="0.72"/>
<circle cx="463.6" cy="377.7" r="1.25" fill="#ff0000" fill-opacity="0.72"/>
<circle cx="460.2" cy="377.7" r="1.25" fill="#ff0000" fill-opacity="0.72"/>
<circle cx="463.6" cy="383.4" r="1.25" fill="#ff0000" fill-opacity="0.72"/>
<circle cx="464.3" cy="385.0" r="1.25" fill="#ff0000" fill-opacity="0.72"/>
<circle cx="464.5" cy="386.4" r="1.25" fill="#ff0000" fill-opacity="0.72"/>
<circle cx="460.2" cy="386.8" r="1.25" fill="#ff0000" fill-opacity="0.72"/>
<circle cx="459.9" cy="390.2" r="1.25" fill="#ff0000" fill-opacity="0.72"/>
<circle cx="464.9" cy="391.1" r="1.25" fill="#ff0000" fill-opacity="0.72"/>
<circle cx="468.3" cy="390.2" r="1.25" fill="#ff0000" fill-opacity="0.72"/>
<circle cx="469.7" cy="388.8" r="1.25" fill="#ff0000" fill-opacity="0.72"/>
<circle cx="518.5" cy="359.4" r="1.25" fill="#ff0000" fill-opacity="0.72"/>
<circle cx="520.8" cy="359.4" r="1.25" fill="#ff0000" fill-opacity="0.72"/>
<circle cx="525.8" cy="354.0" r="1.25" fill="#ff0000" fill-opacity="0.72"/>
<circle cx="528.9" cy="359.8" r="1.25" fill="#ff0000" fill-opacity="0.72"/>
<circle cx="532.0" cy="359.4" r="1.25" fill="#ff0000" fill-opacity="0.72"/>
<circle cx="533.4" cy="358.8" r="1.25" fill="#ff0000" fill-opacity="0.72"/>
<circle cx="533.0" cy="363.2" r="1.25" fill="#ff0000" fill-opacity="0.72"/>
<circle cx="538.8" cy="360.7" r="1.25" fill="#ff0000" fill-opacity="0.72"/>
<circle cx="541.8" cy="352.6" r="1.25" fill="#ff0000" fill-opacity="0.72"/>
<circle cx="544.7" cy="359.4" r="1.25" fill="#ff0000" fill-opacity="0.72"/>
<circle cx="460.9" cy="394.8" r="1.25" fill="#ff0000" fill-opacity="0.72"/>
<circle cx="463.6" cy="394.1" r="1.25" fill="#ff0000" fill-opacity="0.72"/>
<circle cx="464.9" cy="394.8" r="1.25" fill="#ff0000" fill-opacity="0.72"/>
<circle cx="469.7" cy="394.1" r="1.25" fill="#ff0000" fill-opacity="0.72"/>
<circle cx="477.1" cy="392.7" r="1.25" fill="#ff0000" fill-opacity="0.72"/>
<circle cx="481.8" cy="395.4" r="1.25" fill="#ff0000" fill-opacity="0.72"/>
<circle cx="454.5" cy="396.4" r="1.25" fill="#ff0000" fill-opacity="0.72"/>
<circle cx="471.7" cy="397.5" r="1.25" fill="#ff0000" fill-opacity="0.72"/>
<circle cx="468.0" cy="399.9" r="1.25" fill="#ff0000" fill-opacity="0.72"/>
<circle cx="473.7" cy="400.4" r="1.25" fill="#ff0000" fill-opacity="0.72"/>
<circle cx="474.0" cy="401.8" r="1.25" fill="#ff0000" fill-opacity="0.72"/>
<circle cx="478.0" cy="401.2" r="1.25" fill="#ff0000" fill-opacity="0.72"/>
<circle cx="464.3" cy="388.3" r="1.25" fill="#ff0000" fill-opacity="0.72"/>
<circle cx="459.5" cy="262.2" r="1.25" fill="#0000ff" fill-opacity="0.72"/>
<circle cx="463.6" cy="262.8" r="1.25" fill="#0000ff" fill-opacity="0.72"/>
<circle cx="467.6" cy="263.1" r="1.25" fill="#0000ff" fill-opacity="0.72"/>
<circle cx="464.0" cy="264.7" r="1.25" fill="#0000ff" fill-opacity="0.72"/>
<circle cx="466.3" cy="263.4" r="1.25" fill="#0000ff" fill-opacity="0.72"/>
<circle cx="470.3" cy="265.7" r="1.25" fill="#0000ff" fill-opacity="0.72"/>
<circle cx="473.0" cy="265.7" r="1.25" fill="#0000ff" fill-opacity="0.72"/>
<circle cx="475.3" cy="267.0" r="1.25" fill="#0000ff" fill-opacity="0.72"/>
<circle cx="477.5" cy="267.4" r="1.25" fill="#0000ff" fill-opacity="0.72"/>
<circle cx="462.6" cy="265.4" r="1.25" fill="#0000ff" fill-opacity="0.72"/>
<circle cx="464.3" cy="266.5" r="1.25" fill="#0000ff" fill-opacity="0.72"/>
<circle cx="466.3" cy="269.5" r="1.25" fill="#0000ff" fill-opacity="0.72"/>
<circle cx="458.6" cy="270.1" r="1.25" fill="#0000ff" fill-opacity="0.72"/>
<circle cx="462.0" cy="273.5" r="1.25" fill="#0000ff" fill-opacity="0.72"/>
<circle cx="478.8" cy="270.8" r="1.25" fill="#0000ff" fill-opacity="0.72"/>
<circle cx="481.8" cy="273.5" r="1.25" fill="#0000ff" fill-opacity="0.72"/>
<circle cx="462.9" cy="278.2" r="1.25" fill="#0000ff" fill-opacity="0.72"/>
<circle cx="464.9" cy="277.8" r="1.25" fill="#0000ff" fill-opacity="0.72"/>
<circle cx="466.3" cy="277.6" r="1.25" fill="#0000ff" fill-opacity="0.72"/>
<circle cx="468.6" cy="276.9" r="1.25" fill="#0000ff" fill-opacity="0.72"/>
<circle cx="480.5" cy="279.6" r="1.25" fill="#0000ff" fill-opacity="0.72"/>
<circle cx="481.8" cy="279.6" r="1.25" fill="#0000ff" fill-opacity="0.72"/>
<circle cx="481.1" cy="281.6" r="1.25" fill="#0000ff" fill-opacity="0.72"/>
<circle cx="482.5" cy="283.9" r="1.25" fill="#0000ff" fill-opacity="0.72"/>
<circle cx="472.4" cy="285.3" r="1.25" fill="#0000ff" fill-opacity="0.72"/>
<circle cx="457.5" cy="289.0" r="1.25" fill="#0000ff" fill-opacity="0.72"/>
<circle cx="459.1" cy="288.4" r="1.25" fill="#0000ff" fill-opacity="0.72"/>
<circle cx="460.5" cy="288.1" r="1.25" fill="#0000ff" fill-opacity="0.72"/>
<circle cx="466.3" cy="288.1" r="1.25" fill="#0000ff" fill-opacity="0.72"/>
<circle cx="465.2" cy="291.3" r="1.25" fill="#0000ff" fill-opacity="0.72"/>
<circle cx="468.0" cy="292.0" r="1.25" fill="#0000ff" fill-opacity="0.72"/>
<circle cx="464.7" cy="294.0" r="1.25" fill="#0000ff" fill-opacity="0.72"/>
<circle cx="489.0" cy="294.7" r="1.25" fill="#0000ff" fill-opacity="0.72"/>
<circle cx="468.0" cy="298.5" r="1.25" fill="#0000ff" fill-opacity="0.72"/>
<circle cx="469.7" cy="300.8" r="1.25" fill="#0000ff" fill-opacity="0.72"/>
<circle cx="463.6" cy="302.1" r="1.25" fill="#0000ff" fill-opacity="0.72"/>
<circle cx="500.0" cy="288.1" r="1.25" fill="#0000ff" fill-opacity="0.72"/>
<circle cx="498.0" cy="299.4" r="1.25" fill="#0000ff" fill-opacity="0.72"/>
<circle cx="502.3" cy="298.5" r="1.25" fill="#0000ff" fill-opacity="0.72"/>
<circle cx="505.8" cy="310.9" r="1.25" fill="#0000ff" fill-opacity="0.72"/>
<circle cx="509.5" cy="312.0" r="1.25" fill="#0000ff" fill-opacity="0.72"/>
<circle cx="510.8" cy="313.3" r="1.25" fill="#0000ff" fill-opacity="0.72"/>
<circle cx="514.5" cy="311.6" r="1.25" fill="#0000ff" fill-opacity="0.72"/>
<circle cx="515.0" cy="312.9" r="1.25" fill="#0000ff" fill-opacity="0.72"/>
<circle cx="519.9" cy="316.0" r="1.25" fill="#0000ff" fill-opacity="0.72"/>
<circle cx="523.5" cy="315.4" r="1.25" fill="#0000ff" fill-opacity="0.72"/>
<circle cx="524.9" cy="320.4" r="1.25" fill="#0000ff" fill-opacity="0.72"/>
<circle cx="526.9" cy="319.0" r="1.25" fill="#0000ff" fill-opacity="0.72"/>
<circle cx="525.6" cy="326.8" r="1.25" fill="#0000ff" fill-opacity="0.72"/>
<circle cx="532.0" cy="329.7" r="1.25" fill="#0000ff" fill-opacity="0.72"/>
<circle cx="535.7" cy="330.8" r="1.25" fill="#0000ff" fill-opacity="0.72"/>
<circle cx="538.8" cy="333.7" r="1.25" fill="#0000ff" fill-opacity="0.72"/>
<circle cx="611.4" cy="330.5" r="1.25" fill="#0000ff" fill-opacity="0.72"/>
<circle cx="614.9" cy="331.8" r="1.25" fill="#0000ff" fill-opacity="0.72"/>
<circle cx="604.7" cy="338.2" r="1.25" fill="#0000ff" fill-opacity="0.72"/>
<circle cx="607.8" cy="339.3" r="1.25" fill="#0000ff" fill-opacity="0.72"/>
<circle cx="614.9" cy="340.9" r="1.25" fill="#0000ff" fill-opacity="0.72"/>
<circle cx="616.3" cy="342.9" r="1.25" fill="#0000ff" fill-opacity="0.72"/>
<circle cx="612.8" cy="345.6" r="1.25" fill="#0000ff" fill-opacity="0.72"/>
<circle cx="615.9" cy="348.6" r="1.25" fill="#0000ff" fill-opacity="0.72"/>
<circle cx="618.2" cy="348.6" r="1.25" fill="#0000ff" fill-opacity="0.72"/>
<circle cx="621.7" cy="351.0" r="1.25" fill="#0000ff" fill-opacity="0.72"/>
<circle cx="623.0" cy="356.0" r="1.25" fill="#0000ff" fill-opacity="0.72"/>
<circle cx="630.1" cy="355.1" r="1.25" fill="#0000ff" fill-opacity="0.72"/>
<circle cx="628.7" cy="360.2" r="1.25" fill="#0000ff" fill-opacity="0.72"/>
<circle cx="624.0" cy="362.9" r="1.25" fill="#0000ff" fill-opacity="0.72"/>
<circle cx="633.0" cy="364.1" r="1.25" fill="#0000ff" fill-opacity="0.72"/>
<circle cx="636.5" cy="364.2" r="1.25" fill="#0000ff" fill-opacity="0.72"/>
<circle cx="633.4" cy="368.3" r="1.25" fill="#0000ff" fill-opacity="0.72"/>
<circle cx="634.4" cy="371.5" r="1.25" fill="#0000ff" fill-opacity="0.72"/>
<circle cx="639.2" cy="371.7" r="1.25" fill="#0000ff" fill-opacity="0.72"/>
<circle cx="643.4" cy="365.9" r="1.25" fill="#0000ff" fill-opacity="0.72"/>
<circle cx="649.5" cy="368.8" r="1.25" fill="#0000ff" fill-opacity="0.72"/>
<circle cx="649.2" cy="373.7" r="1.25" fill="#0000ff" fill-opacity="0.72"/>
<circle cx="650.2" cy="375.6" r="1.25" fill="#0000ff" fill-opacity="0.72"/>
<circle cx="644.4" cy="378.0" r="1.25" fill="#0000ff" fill-opacity="0.72"/>
<circle cx="650.9" cy="379.1" r="1.25" fill="#0000ff" fill-opacity="0.72"/>
<circle cx="654.9" cy="376.9" r="1.25" fill="#0000ff" fill-opacity="0.72"/>
<circle cx="659.6" cy="375.7" r="1.25" fill="#0000ff" fill-opacity="0.72"/>
<circle cx="668.4" cy="371.0" r="1.25" fill="#0000ff" fill-opacity="0.72"/>
<circle cx="666.8" cy="380.4" r="1.25" fill="#0000ff" fill-opacity="0.72"/>
<circle cx="668.1" cy="378.3" r="1.25" fill="#0000ff" fill-opacity="0.72"/>
<circle cx="670.0" cy="379.4" r="1.25" fill="#0000ff" fill-opacity="0.72"/>
<circle cx="672.7" cy="378.0" r="1.25" fill="#0000ff" fill-opacity="0.72"/>
<circle cx="669.1" cy="383.4" r="1.25" fill="#0000ff" fill-opacity="0.72"/>
<circle cx="671.8" cy="384.1" r="1.25" fill="#0000ff" fill-opacity="0.72"/>
<circle cx="669.8" cy="386.8" r="1.25" fill="#0000ff" fill-opacity="0.72"/>
<circle cx="669.5" cy="390.2" r="1.25" fill="#0000ff" fill-opacity="0.72"/>
<circle cx="651.1" cy="383.4" r="1.25" fill="#0000ff" fill-opacity="0.72"/>
<circle cx="652.9" cy="386.1" r="1.25" fill="#0000ff" fill-opacity="0.72"/>
<circle cx="679.9" cy="375.0" r="1.25" fill="#0000ff" fill-opacity="0.72"/>
<circle cx="681.9" cy="372.6" r="1.25" fill="#0000ff" fill-opacity="0.72"/>
<circle cx="683.0" cy="374.2" r="1.25" fill="#0000ff" fill-opacity="0.72"/>
<circle cx="688.0" cy="371.0" r="1.25" fill="#0000ff" fill-opacity="0.72"/>
<circle cx="690.0" cy="374.2" r="1.25" fill="#0000ff" fill-opacity="0.72"/>
<circle cx="682.6" cy="379.6" r="1.25" fill="#0000ff" fill-opacity="0.72"/>
<circle cx="684.3" cy="378.0" r="1.25" fill="#0000ff" fill-opacity="0.72"/>
<circle cx="686.6" cy="377.3" r="1.25" fill="#0000ff" fill-opacity="0.72"/>
<circle cx="687.3" cy="380.0" r="1.25" fill="#0000ff" fill-opacity="0.72"/>
<circle cx="688.0" cy="383.4" r="1.25" fill="#0000ff" fill-opacity="0.72"/>
<circle cx="690.7" cy="377.3" r="1.25" fill="#0000ff" fill-opacity="0.72"/>
<circle cx="681.9" cy="383.1" r="1.25" fill="#0000ff" fill-opacity="0.72"/>
<circle cx="682.6" cy="386.1" r="1.25" fill="#0000ff" fill-opacity="0.72"/>
<circle cx="679.9" cy="387.5" r="1.25" fill="#0000ff" fill-opacity="0.72"/>
<circle cx="681.6" cy="390.2" r="1.25" fill="#0000ff" fill-opacity="0.72"/>
<circle cx="689.3" cy="384.8" r="1.25" fill="#0000ff" fill-opacity="0.72"/>
<circle cx="687.6" cy="385.4" r="1.25" fill="#0000ff" fill-opacity="0.72"/>
<circle cx="690.0" cy="386.8" r="1.25" fill="#0000ff" fill-opacity="0.72"/>
<circle cx="694.3" cy="385.4" r="1.25" fill="#0000ff" fill-opacity="0.72"/>
<circle cx="694.3" cy="387.5" r="1.25" fill="#0000ff" fill-opacity="0.72"/>
<circle cx="694.3" cy="390.8" r="1.25" fill="#0000ff" fill-opacity="0.72"/>
<circle cx="569.8" cy="200.3" r="1.25" fill="#008000" fill-opacity="0.72"/>
<circle cx="564.4" cy="210.9" r="1.25" fill="#008000" fill-opacity="0.72"/>
<circle cx="519.1" cy="254.2" r="1.25" fill="#008000" fill-opacity="0.72"/>
<circle cx="594.7" cy="215.3" r="1.25" fill="#008000" fill-opacity="0.72"/>
<circle cx="583.5" cy="258.5" r="1.25" fill="#008000" fill-opacity="0.72"/>
<circle cx="594.0" cy="260.5" r="1.25" fill="#008000" fill-opacity="0.72"/>
<circle cx="592.5" cy="198.4" r="1.25" fill="#008000" fill-opacity="0.72"/>
<circle cx="645.2" cy="250.4" r="1.25" fill="#008000" fill-opacity="0.72"/>
<circle cx="647.9" cy="261.8" r="1.25" fill="#008000" fill-opacity="0.72"/>
<circle cx="485.9" cy="265.7" r="1.25" fill="#008000" fill-opacity="0.72"/>
<circle cx="498.0" cy="266.5" r="1.25" fill="#008000" fill-opacity="0.72"/>
<circle cx="508.8" cy="268.8" r="1.25" fill="#008000" fill-opacity="0.72"/>
<circle cx="506.8" cy="273.5" r="1.25" fill="#008000" fill-opacity="0.72"/>
<circle cx="469.7" cy="299.2" r="1.25" fill="#008000" fill-opacity="0.72"/>
<circle cx="452.8" cy="306.6" r="1.25" fill="#008000" fill-opacity="0.72"/>
<circle cx="494.2" cy="311.7" r="1.25" fill="#008000" fill-opacity="0.72"/>
<circle cx="508.1" cy="311.3" r="1.25" fill="#008000" fill-opacity="0.72"/>
<circle cx="507.9" cy="323.1" r="1.25" fill="#008000" fill-opacity="0.72"/>
<circle cx="470.6" cy="325.5" r="1.25" fill="#008000" fill-opacity="0.72"/>
<circle cx="512.2" cy="298.2" r="1.25" fill="#008000" fill-opacity="0.72"/>
<circle cx="528.9" cy="276.9" r="1.25" fill="#008000" fill-opacity="0.72"/>
<circle cx="526.6" cy="284.3" r="1.25" fill="#008000" fill-opacity="0.72"/>
<circle cx="542.4" cy="292.0" r="1.25" fill="#008000" fill-opacity="0.72"/>
<circle cx="518.1" cy="302.8" r="1.25" fill="#008000" fill-opacity="0.72"/>
<circle cx="548.1" cy="302.8" r="1.25" fill="#008000" fill-opacity="0.72"/>
<circle cx="552.6" cy="308.3" r="1.25" fill="#008000" fill-opacity="0.72"/>
<circle cx="548.2" cy="314.0" r="1.25" fill="#008000" fill-opacity="0.72"/>
<circle cx="551.2" cy="314.0" r="1.25" fill="#008000" fill-opacity="0.72"/>
<circle cx="548.8" cy="316.7" r="1.25" fill="#008000" fill-opacity="0.72"/>
<circle cx="555.9" cy="321.7" r="1.25" fill="#008000" fill-opacity="0.72"/>
<circle cx="569.4" cy="292.8" r="1.25" fill="#008000" fill-opacity="0.72"/>
<circle cx="573.2" cy="303.9" r="1.25" fill="#008000" fill-opacity="0.72"/>
<circle cx="573.2" cy="279.3" r="1.25" fill="#008000" fill-opacity="0.72"/>
<circle cx="575.9" cy="273.9" r="1.25" fill="#008000" fill-opacity="0.72"/>
<circle cx="535.7" cy="326.8" r="1.25" fill="#008000" fill-opacity="0.72"/>
<circle cx="594.7" cy="282.3" r="1.25" fill="#008000" fill-opacity="0.72"/>
<circle cx="599.0" cy="284.3" r="1.25" fill="#008000" fill-opacity="0.72"/>
<circle cx="610.5" cy="280.0" r="1.25" fill="#008000" fill-opacity="0.72"/>
<circle cx="608.1" cy="288.0" r="1.25" fill="#008000" fill-opacity="0.72"/>
<circle cx="581.2" cy="292.4" r="1.25" fill="#008000" fill-opacity="0.72"/>
<circle cx="583.9" cy="295.8" r="1.25" fill="#008000" fill-opacity="0.72"/>
<circle cx="585.2" cy="297.1" r="1.25" fill="#008000" fill-opacity="0.72"/>
<circle cx="589.3" cy="302.1" r="1.25" fill="#008000" fill-opacity="0.72"/>
<circle cx="595.6" cy="304.6" r="1.25" fill="#008000" fill-opacity="0.72"/>
<circle cx="603.1" cy="304.3" r="1.25" fill="#008000" fill-opacity="0.72"/>
<circle cx="606.4" cy="316.0" r="1.25" fill="#008000" fill-opacity="0.72"/>
<circle cx="607.8" cy="320.8" r="1.25" fill="#008000" fill-opacity="0.72"/>
<circle cx="611.4" cy="324.8" r="1.25" fill="#008000" fill-opacity="0.72"/>
<circle cx="624.4" cy="285.3" r="1.25" fill="#008000" fill-opacity="0.72"/>
<circle cx="630.3" cy="282.7" r="1.25" fill="#008000" fill-opacity="0.72"/>
<circle cx="632.5" cy="282.7" r="1.25" fill="#008000" fill-opacity="0.72"/>
<circle cx="639.5" cy="281.6" r="1.25" fill="#008000" fill-opacity="0.72"/>
<circle cx="648.8" cy="271.9" r="1.25" fill="#008000" fill-opacity="0.72"/>
<circle cx="648.2" cy="279.3" r="1.25" fill="#008000" fill-opacity="0.72"/>
<circle cx="660.3" cy="305.2" r="1.25" fill="#008000" fill-opacity="0.72"/>
<circle cx="664.1" cy="309.0" r="1.25" fill="#008000" fill-opacity="0.72"/>
<circle cx="688.9" cy="322.5" r="1.25" fill="#008000" fill-opacity="0.72"/>
<circle cx="694.7" cy="325.9" r="1.25" fill="#008000" fill-opacity="0.72"/>
<circle cx="687.3" cy="327.5" r="1.25" fill="#008000" fill-opacity="0.72"/>
<circle cx="489.5" cy="340.5" r="1.25" fill="#008000" fill-opacity="0.72"/>
<circle cx="528.9" cy="329.7" r="1.25" fill="#008000" fill-opacity="0.72"/>
<circle cx="554.6" cy="328.7" r="1.25" fill="#008000" fill-opacity="0.72"/>
<circle cx="544.2" cy="333.7" r="1.25" fill="#008000" fill-opacity="0.72"/>
<circle cx="541.8" cy="339.1" r="1.25" fill="#008000" fill-opacity="0.72"/>
<circle cx="543.8" cy="338.2" r="1.25" fill="#008000" fill-opacity="0.72"/>
<circle cx="547.2" cy="338.6" r="1.25" fill="#008000" fill-opacity="0.72"/>
<circle cx="551.2" cy="334.5" r="1.25" fill="#008000" fill-opacity="0.72"/>
<circle cx="560.9" cy="334.5" r="1.25" fill="#008000" fill-opacity="0.72"/>
<circle cx="552.6" cy="341.6" r="1.25" fill="#008000" fill-opacity="0.72"/>
<circle cx="557.3" cy="343.6" r="1.25" fill="#008000" fill-opacity="0.72"/>
<circle cx="569.4" cy="349.4" r="1.25" fill="#008000" fill-opacity="0.72"/>
<circle cx="573.5" cy="351.0" r="1.25" fill="#008000" fill-opacity="0.72"/>
<circle cx="556.3" cy="373.7" r="1.25" fill="#008000" fill-opacity="0.72"/>
<circle cx="539.1" cy="383.4" r="1.25" fill="#008000" fill-opacity="0.72"/>
<circle cx="576.2" cy="348.0" r="1.25" fill="#008000" fill-opacity="0.72"/>
<circle cx="608.5" cy="329.1" r="1.25" fill="#008000" fill-opacity="0.72"/>
<circle cx="593.3" cy="332.4" r="1.25" fill="#008000" fill-opacity="0.72"/>
<circle cx="605.5" cy="334.8" r="1.25" fill="#008000" fill-opacity="0.72"/>
<circle cx="594.7" cy="337.2" r="1.25" fill="#008000" fill-opacity="0.72"/>
<circle cx="619.0" cy="339.9" r="1.25" fill="#008000" fill-opacity="0.72"/>
<circle cx="591.2" cy="343.6" r="1.25" fill="#008000" fill-opacity="0.72"/>
<circle cx="596.6" cy="345.6" r="1.25" fill="#008000" fill-opacity="0.72"/>
<circle cx="599.0" cy="349.0" r="1.25" fill="#008000" fill-opacity="0.72"/>
<circle cx="602.0" cy="348.3" r="1.25" fill="#008000" fill-opacity="0.72"/>
<circle cx="587.5" cy="352.4" r="1.25" fill="#008000" fill-opacity="0.72"/>
<circle cx="581.7" cy="358.8" r="1.25" fill="#008000" fill-opacity="0.72"/>
<circle cx="593.3" cy="360.5" r="1.25" fill="#008000" fill-opacity="0.72"/>
<circle cx="591.2" cy="363.2" r="1.25" fill="#008000" fill-opacity="0.72"/>
<circle cx="578.8" cy="363.4" r="1.25" fill="#008000" fill-opacity="0.72"/>
<circle cx="584.4" cy="367.5" r="1.25" fill="#008000" fill-opacity="0.72"/>
<circle cx="604.4" cy="355.3" r="1.25" fill="#008000" fill-opacity="0.72"/>
<circle cx="620.9" cy="348.0" r="1.25" fill="#008000" fill-opacity="0.72"/>
<circle cx="617.9" cy="353.7" r="1.25" fill="#008000" fill-opacity="0.72"/>
<circle cx="617.9" cy="359.4" r="1.25" fill="#008000" fill-opacity="0.72"/>
<circle cx="624.4" cy="363.8" r="1.25" fill="#008000" fill-opacity="0.72"/>
<circle cx="606.8" cy="370.2" r="1.25" fill="#008000" fill-opacity="0.72"/>
<circle cx="604.1" cy="373.7" r="1.25" fill="#008000" fill-opacity="0.72"/>
<circle cx="598.3" cy="376.7" r="1.25" fill="#008000" fill-opacity="0.72"/>
<circle cx="595.0" cy="385.7" r="1.25" fill="#008000" fill-opacity="0.72"/>
<circle cx="623.6" cy="384.8" r="1.25" fill="#008000" fill-opacity="0.72"/>
<circle cx="633.8" cy="329.1" r="1.25" fill="#008000" fill-opacity="0.72"/>
<circle cx="634.1" cy="336.8" r="1.25" fill="#008000" fill-opacity="0.72"/>
<circle cx="642.5" cy="340.9" r="1.25" fill="#008000" fill-opacity="0.72"/>
<circle cx="647.5" cy="344.3" r="1.25" fill="#008000" fill-opacity="0.72"/>
<circle cx="664.6" cy="347.2" r="1.25" fill="#008000" fill-opacity="0.72"/>
<circle cx="672.2" cy="351.7" r="1.25" fill="#008000" fill-opacity="0.72"/>
<circle cx="685.7" cy="349.0" r="1.25" fill="#008000" fill-opacity="0.72"/>
<circle cx="690.7" cy="351.7" r="1.25" fill="#008000" fill-opacity="0.72"/>
<circle cx="647.5" cy="357.1" r="1.25" fill="#008000" fill-opacity="0.72"/>
<circle cx="652.9" cy="359.8" r="1.25" fill="#008000" fill-opacity="0.72"/>
<circle cx="677.2" cy="359.4" r="1.25" fill="#008000" fill-opacity="0.72"/>
<circle cx="653.6" cy="378.7" r="1.25" fill="#008000" fill-opacity="0.72"/>
<circle cx="501.0" cy="392.3" r="1.25" fill="#008000" fill-opacity="0.72"/>
<circle cx="511.5" cy="404.5" r="1.25" fill="#008000" fill-opacity="0.72"/>
<circle cx="489.9" cy="413.0" r="1.25" fill="#008000" fill-opacity="0.72"/>
<circle cx="492.3" cy="411.2" r="1.25" fill="#008000" fill-opacity="0.72"/>
<circle cx="499.1" cy="413.0" r="1.25" fill="#008000" fill-opacity="0.72"/>
<circle cx="482.5" cy="418.0" r="1.25" fill="#008000" fill-opacity="0.72"/>
<circle cx="485.2" cy="418.0" r="1.25" fill="#008000" fill-opacity="0.72"/>
<circle cx="499.6" cy="418.7" r="1.25" fill="#008000" fill-opacity="0.72"/>
<circle cx="523.5" cy="395.4" r="1.25" fill="#008000" fill-opacity="0.72"/>
<circle cx="535.3" cy="394.8" r="1.25" fill="#008000" fill-opacity="0.72"/>
<circle cx="520.8" cy="402.9" r="1.25" fill="#008000" fill-opacity="0.72"/>
<circle cx="554.2" cy="416.4" r="1.25" fill="#008000" fill-opacity="0.72"/>
<circle cx="538.8" cy="446.1" r="1.25" fill="#008000" fill-opacity="0.72"/>
<circle cx="543.8" cy="448.1" r="1.25" fill="#008000" fill-opacity="0.72"/>
<circle cx="588.2" cy="394.1" r="1.25" fill="#008000" fill-opacity="0.72"/>
<circle cx="578.8" cy="427.2" r="1.25" fill="#008000" fill-opacity="0.72"/>
<circle cx="653.8" cy="395.4" r="1.25" fill="#008000" fill-opacity="0.72"/>
<circle cx="653.3" cy="406.6" r="1.25" fill="#008000" fill-opacity="0.72"/>
<circle cx="647.9" cy="411.6" r="1.25" fill="#008000" fill-opacity="0.72"/>
<circle cx="645.7" cy="414.7" r="1.25" fill="#008000" fill-opacity="0.72"/>
<circle cx="646.8" cy="424.5" r="1.25" fill="#008000" fill-opacity="0.72"/>
<circle cx="480.5" cy="254.7" r="1.25" fill="#ffa500" fill-opacity="0.72"/>
<circle cx="482.5" cy="254.1" r="1.25" fill="#ffa500" fill-opacity="0.72"/>
<circle cx="484.5" cy="253.0" r="1.25" fill="#ffa500" fill-opacity="0.72"/>
<circle cx="478.8" cy="258.4" r="1.25" fill="#ffa500" fill-opacity="0.72"/>
<circle cx="478.8" cy="260.5" r="1.25" fill="#ffa500" fill-opacity="0.72"/>
<circle cx="475.3" cy="261.1" r="1.25" fill="#ffa500" fill-opacity="0.72"/>
<circle cx="490.2" cy="259.9" r="1.25" fill="#ffa500" fill-opacity="0.72"/>
<circle cx="499.1" cy="260.5" r="1.25" fill="#ffa500" fill-opacity="0.72"/>
<circle cx="487.9" cy="263.5" r="1.25" fill="#ffa500" fill-opacity="0.72"/>
<circle cx="568.1" cy="202.5" r="1.25" fill="#ffa500" fill-opacity="0.72"/>
<circle cx="565.7" cy="212.9" r="1.25" fill="#ffa500" fill-opacity="0.72"/>
<circle cx="571.9" cy="210.4" r="1.25" fill="#ffa500" fill-opacity="0.72"/>
<circle cx="557.4" cy="219.1" r="1.25" fill="#ffa500" fill-opacity="0.72"/>
<circle cx="550.4" cy="231.0" r="1.25" fill="#ffa500" fill-opacity="0.72"/>
<circle cx="544.3" cy="243.3" r="1.25" fill="#ffa500" fill-opacity="0.72"/>
<circle cx="556.2" cy="241.8" r="1.25" fill="#ffa500" fill-opacity="0.72"/>
<circle cx="520.2" cy="251.9" r="1.25" fill="#ffa500" fill-opacity="0.72"/>
<circle cx="550.9" cy="256.9" r="1.25" fill="#ffa500" fill-opacity="0.72"/>
<circle cx="593.3" cy="203.4" r="1.25" fill="#ffa500" fill-opacity="0.72"/>
<circle cx="596.3" cy="204.5" r="1.25" fill="#ffa500" fill-opacity="0.72"/>
<circle cx="597.3" cy="207.9" r="1.25" fill="#ffa500" fill-opacity="0.72"/>
<circle cx="590.2" cy="222.9" r="1.25" fill="#ffa500" fill-opacity="0.72"/>
<circle cx="595.6" cy="224.0" r="1.25" fill="#ffa500" fill-opacity="0.72"/>
<circle cx="593.3" cy="239.5" r="1.25" fill="#ffa500" fill-opacity="0.72"/>
<circle cx="586.6" cy="249.3" r="1.25" fill="#ffa500" fill-opacity="0.72"/>
<circle cx="584.8" cy="253.1" r="1.25" fill="#ffa500" fill-opacity="0.72"/>
<circle cx="593.3" cy="255.1" r="1.25" fill="#ffa500" fill-opacity="0.72"/>
<circle cx="581.2" cy="257.4" r="1.25" fill="#ffa500" fill-opacity="0.72"/>
<circle cx="581.2" cy="260.1" r="1.25" fill="#ffa500" fill-opacity="0.72"/>
<circle cx="607.1" cy="247.7" r="1.25" fill="#ffa500" fill-opacity="0.72"/>
<circle cx="607.8" cy="250.3" r="1.25" fill="#ffa500" fill-opacity="0.72"/>
<circle cx="606.4" cy="251.4" r="1.25" fill="#ffa500" fill-opacity="0.72"/>
<circle cx="616.6" cy="243.3" r="1.25" fill="#ffa500" fill-opacity="0.72"/>
<circle cx="618.2" cy="244.3" r="1.25" fill="#ffa500" fill-opacity="0.72"/>
<circle cx="622.6" cy="240.6" r="1.25" fill="#ffa500" fill-opacity="0.72"/>
<circle cx="624.0" cy="239.5" r="1.25" fill="#ffa500" fill-opacity="0.72"/>
<circle cx="626.7" cy="236.2" r="1.25" fill="#ffa500" fill-opacity="0.72"/>
<circle cx="629.0" cy="237.9" r="1.25" fill="#ffa500" fill-opacity="0.72"/>
<circle cx="631.7" cy="233.5" r="1.25" fill="#ffa500" fill-opacity="0.72"/>
<circle cx="632.4" cy="240.2" r="1.25" fill="#ffa500" fill-opacity="0.72"/>
<circle cx="632.4" cy="241.6" r="1.25" fill="#ffa500" fill-opacity="0.72"/>
<circle cx="631.1" cy="244.9" r="1.25" fill="#ffa500" fill-opacity="0.72"/>
<circle cx="638.2" cy="236.8" r="1.25" fill="#ffa500" fill-opacity="0.72"/>
<circle cx="640.2" cy="236.2" r="1.25" fill="#ffa500" fill-opacity="0.72"/>
<circle cx="642.1" cy="243.9" r="1.25" fill="#ffa500" fill-opacity="0.72"/>
<circle cx="649.5" cy="250.4" r="1.25" fill="#ffa500" fill-opacity="0.72"/>
<circle cx="642.1" cy="256.4" r="1.25" fill="#ffa500" fill-opacity="0.72"/>
<circle cx="644.8" cy="256.4" r="1.25" fill="#ffa500" fill-opacity="0.72"/>
<circle cx="644.1" cy="261.8" r="1.25" fill="#ffa500" fill-opacity="0.72"/>
<circle cx="652.2" cy="260.1" r="1.25" fill="#ffa500" fill-opacity="0.72"/>
<circle cx="483.2" cy="266.1" r="1.25" fill="#ffa500" fill-opacity="0.72"/>
<circle cx="490.6" cy="265.1" r="1.25" fill="#ffa500" fill-opacity="0.72"/>
<circle cx="496.0" cy="266.1" r="1.25" fill="#ffa500" fill-opacity="0.72"/>
<circle cx="485.6" cy="269.2" r="1.25" fill="#ffa500" fill-opacity="0.72"/>
<circle cx="483.8" cy="273.8" r="1.25" fill="#ffa500" fill-opacity="0.72"/>
<circle cx="510.4" cy="266.1" r="1.25" fill="#ffa500" fill-opacity="0.72"/>
<circle cx="504.8" cy="270.8" r="1.25" fill="#ffa500" fill-opacity="0.72"/>
<circle cx="449.7" cy="294.0" r="1.25" fill="#ffa500" fill-opacity="0.72"/>
<circle cx="449.1" cy="299.8" r="1.25" fill="#ffa500" fill-opacity="0.72"/>
<circle cx="479.4" cy="300.9" r="1.25" fill="#ffa500" fill-opacity="0.72"/>
<circle cx="492.6" cy="307.5" r="1.25" fill="#ffa500" fill-opacity="0.72"/>
<circle cx="509.9" cy="289.0" r="1.25" fill="#ffa500" fill-opacity="0.72"/>
<circle cx="509.5" cy="295.8" r="1.25" fill="#ffa500" fill-opacity="0.72"/>
<circle cx="510.2" cy="300.9" r="1.25" fill="#ffa500" fill-opacity="0.72"/>
<circle cx="510.4" cy="306.6" r="1.25" fill="#ffa500" fill-opacity="0.72"/>
<circle cx="507.5" cy="316.0" r="1.25" fill="#ffa500" fill-opacity="0.72"/>
<circle cx="477.8" cy="323.1" r="1.25" fill="#ffa500" fill-opacity="0.72"/>
<circle cx="464.0" cy="327.1" r="1.25" fill="#ffa500" fill-opacity="0.72"/>
<circle cx="512.6" cy="283.2" r="1.25" fill="#ffa500" fill-opacity="0.72"/>
<circle cx="518.5" cy="269.2" r="1.25" fill="#ffa500" fill-opacity="0.72"/>
<circle cx="517.5" cy="278.9" r="1.25" fill="#ffa500" fill-opacity="0.72"/>
<circle cx="519.9" cy="278.2" r="1.25" fill="#ffa500" fill-opacity="0.72"/>
<circle cx="524.9" cy="277.3" r="1.25" fill="#ffa500" fill-opacity="0.72"/>
<circle cx="527.6" cy="278.5" r="1.25" fill="#ffa500" fill-opacity="0.72"/>
<circle cx="520.4" cy="281.6" r="1.25" fill="#ffa500" fill-opacity="0.72"/>
<circle cx="524.5" cy="281.6" r="1.25" fill="#ffa500" fill-opacity="0.72"/>
<circle cx="524.9" cy="285.9" r="1.25" fill="#ffa500" fill-opacity="0.72"/>
<circle cx="517.5" cy="289.0" r="1.25" fill="#ffa500" fill-opacity="0.72"/>
<circle cx="520.8" cy="290.8" r="1.25" fill="#ffa500" fill-opacity="0.72"/>
<circle cx="521.8" cy="294.0" r="1.25" fill="#ffa500" fill-opacity="0.72"/>
<circle cx="536.4" cy="280.5" r="1.25" fill="#ffa500" fill-opacity="0.72"/>
<circle cx="538.8" cy="281.2" r="1.25" fill="#ffa500" fill-opacity="0.72"/>
<circle cx="542.8" cy="287.0" r="1.25" fill="#ffa500" fill-opacity="0.72"/>
<circle cx="541.1" cy="292.0" r="1.25" fill="#ffa500" fill-opacity="0.72"/>
<circle cx="537.4" cy="294.0" r="1.25" fill="#ffa500" fill-opacity="0.72"/>
<circle cx="522.9" cy="309.7" r="1.25" fill="#ffa500" fill-opacity="0.72"/>
<circle cx="531.0" cy="307.5" r="1.25" fill="#ffa500" fill-opacity="0.72"/>
<circle cx="529.9" cy="312.4" r="1.25" fill="#ffa500" fill-opacity="0.72"/>
<circle cx="531.0" cy="316.0" r="1.25" fill="#ffa500" fill-opacity="0.72"/>
<circle cx="515.8" cy="316.7" r="1.25" fill="#ffa500" fill-opacity="0.72"/>
<circle cx="515.4" cy="322.5" r="1.25" fill="#ffa500" fill-opacity="0.72"/>
<circle cx="520.2" cy="323.2" r="1.25" fill="#ffa500" fill-opacity="0.72"/>
<circle cx="521.5" cy="324.1" r="1.25" fill="#ffa500" fill-opacity="0.72"/>
<circle cx="529.9" cy="323.1" r="1.25" fill="#ffa500" fill-opacity="0.72"/>
<circle cx="516.4" cy="326.4" r="1.25" fill="#ffa500" fill-opacity="0.72"/>
<circle cx="541.1" cy="309.7" r="1.25" fill="#ffa500" fill-opacity="0.72"/>
<circle cx="548.2" cy="300.5" r="1.25" fill="#ffa500" fill-opacity="0.72"/>
<circle cx="555.9" cy="292.4" r="1.25" fill="#ffa500" fill-opacity="0.72"/>
<circle cx="556.3" cy="297.8" r="1.25" fill="#ffa500" fill-opacity="0.72"/>
<circle cx="560.7" cy="290.4" r="1.25" fill="#ffa500" fill-opacity="0.72"/>
<circle cx="559.0" cy="302.1" r="1.25" fill="#ffa500" fill-opacity="0.72"/>
<circle cx="562.7" cy="299.2" r="1.25" fill="#ffa500" fill-opacity="0.72"/>
<circle cx="562.3" cy="302.1" r="1.25" fill="#ffa500" fill-opacity="0.72"/>
<circle cx="563.4" cy="295.1" r="1.25" fill="#ffa500" fill-opacity="0.72"/>
<circle cx="565.8" cy="296.7" r="1.25" fill="#ffa500" fill-opacity="0.72"/>
<circle cx="567.4" cy="293.1" r="1.25" fill="#ffa500" fill-opacity="0.72"/>
<circle cx="566.1" cy="303.2" r="1.25" fill="#ffa500" fill-opacity="0.72"/>
<circle cx="570.8" cy="299.4" r="1.25" fill="#ffa500" fill-opacity="0.72"/>
<circle cx="570.1" cy="301.6" r="1.25" fill="#ffa500" fill-opacity="0.72"/>
<circle cx="572.5" cy="291.3" r="1.25" fill="#ffa500" fill-opacity="0.72"/>
<circle cx="565.4" cy="283.9" r="1.25" fill="#ffa500" fill-opacity="0.72"/>
<circle cx="568.8" cy="273.5" r="1.25" fill="#ffa500" fill-opacity="0.72"/>
<circle cx="570.8" cy="268.8" r="1.25" fill="#ffa500" fill-opacity="0.72"/>
<circle cx="574.6" cy="283.9" r="1.25" fill="#ffa500" fill-opacity="0.72"/>
<circle cx="575.5" cy="272.8" r="1.25" fill="#ffa500" fill-opacity="0.72"/>
<circle cx="555.3" cy="307.5" r="1.25" fill="#ffa500" fill-opacity="0.72"/>
<circle cx="556.9" cy="307.9" r="1.25" fill="#ffa500" fill-opacity="0.72"/>
<circle cx="555.3" cy="310.2" r="1.25" fill="#ffa500" fill-opacity="0.72"/>
<circle cx="548.2" cy="315.4" r="1.25" fill="#ffa500" fill-opacity="0.72"/>
<circle cx="553.0" cy="314.4" r="1.25" fill="#ffa500" fill-opacity="0.72"/>
<circle cx="549.6" cy="320.8" r="1.25" fill="#ffa500" fill-opacity="0.72"/>
<circle cx="552.8" cy="319.0" r="1.25" fill="#ffa500" fill-opacity="0.72"/>
<circle cx="544.5" cy="326.8" r="1.25" fill="#ffa500" fill-opacity="0.72"/>
<circle cx="551.9" cy="326.8" r="1.25" fill="#ffa500" fill-opacity="0.72"/>
<circle cx="592.9" cy="270.1" r="1.25" fill="#ffa500" fill-opacity="0.72"/>
<circle cx="580.8" cy="273.5" r="1.25" fill="#ffa500" fill-opacity="0.72"/>
<circle cx="586.9" cy="285.3" r="1.25" fill="#ffa500" fill-opacity="0.72"/>
<circle cx="595.0" cy="280.9" r="1.25" fill="#ffa500" fill-opacity="0.72"/>
<circle cx="597.9" cy="287.7" r="1.25" fill="#ffa500" fill-opacity="0.72"/>
<circle cx="602.0" cy="286.3" r="1.25" fill="#ffa500" fill-opacity="0.72"/>
<circle cx="595.6" cy="290.0" r="1.25" fill="#ffa500" fill-opacity="0.72"/>
<circle cx="592.9" cy="292.0" r="1.25" fill="#ffa500" fill-opacity="0.72"/>
<circle cx="580.1" cy="290.0" r="1.25" fill="#ffa500" fill-opacity="0.72"/>
<circle cx="580.1" cy="294.8" r="1.25" fill="#ffa500" fill-opacity="0.72"/>
<circle cx="582.8" cy="296.5" r="1.25" fill="#ffa500" fill-opacity="0.72"/>
<circle cx="587.9" cy="296.7" r="1.25" fill="#ffa500" fill-opacity="0.72"/>
<circle cx="576.7" cy="296.7" r="1.25" fill="#ffa500" fill-opacity="0.72"/>
<circle cx="578.1" cy="299.2" r="1.25" fill="#ffa500" fill-opacity="0.72"/>
<circle cx="575.8" cy="300.5" r="1.25" fill="#ffa500" fill-opacity="0.72"/>
<circle cx="578.5" cy="302.1" r="1.25" fill="#ffa500" fill-opacity="0.72"/>
<circle cx="582.1" cy="303.5" r="1.25" fill="#ffa500" fill-opacity="0.72"/>
<circle cx="586.2" cy="301.5" r="1.25" fill="#ffa500" fill-opacity="0.72"/>
<circle cx="588.9" cy="300.8" r="1.25" fill="#ffa500" fill-opacity="0.72"/>
<circle cx="590.2" cy="304.2" r="1.25" fill="#ffa500" fill-opacity="0.72"/>
<circle cx="596.3" cy="298.9" r="1.25" fill="#ffa500" fill-opacity="0.72"/>
<circle cx="597.7" cy="298.1" r="1.25" fill="#ffa500" fill-opacity="0.72"/>
<circle cx="601.0" cy="296.2" r="1.25" fill="#ffa500" fill-opacity="0.72"/>
<circle cx="603.7" cy="294.0" r="1.25" fill="#ffa500" fill-opacity="0.72"/>
<circle cx="589.6" cy="309.6" r="1.25" fill="#ffa500" fill-opacity="0.72"/>
<circle cx="592.5" cy="311.6" r="1.25" fill="#ffa500" fill-opacity="0.72"/>
<circle cx="596.3" cy="306.9" r="1.25" fill="#ffa500" fill-opacity="0.72"/>
<circle cx="597.0" cy="309.6" r="1.25" fill="#ffa500" fill-opacity="0.72"/>
<circle cx="604.1" cy="307.9" r="1.25" fill="#ffa500" fill-opacity="0.72"/>
<circle cx="605.1" cy="310.2" r="1.25" fill="#ffa500" fill-opacity="0.72"/>
<circle cx="607.8" cy="310.6" r="1.25" fill="#ffa500" fill-opacity="0.72"/>
<circle cx="603.1" cy="312.0" r="1.25" fill="#ffa500" fill-opacity="0.72"/>
<circle cx="604.4" cy="313.3" r="1.25" fill="#ffa500" fill-opacity="0.72"/>
<circle cx="605.5" cy="314.7" r="1.25" fill="#ffa500" fill-opacity="0.72"/>
<circle cx="595.6" cy="315.4" r="1.25" fill="#ffa500" fill-opacity="0.72"/>
<circle cx="600.4" cy="318.1" r="1.25" fill="#ffa500" fill-opacity="0.72"/>
<circle cx="602.0" cy="317.8" r="1.25" fill="#ffa500" fill-opacity="0.72"/>
<circle cx="595.2" cy="319.4" r="1.25" fill="#ffa500" fill-opacity="0.72"/>
<circle cx="605.1" cy="321.4" r="1.25" fill="#ffa500" fill-opacity="0.72"/>
<circle cx="594.3" cy="323.5" r="1.25" fill="#ffa500" fill-opacity="0.72"/>
<circle cx="616.6" cy="312.0" r="1.25" fill="#ffa500" fill-opacity="0.72"/>
<circle cx="614.5" cy="315.4" r="1.25" fill="#ffa500" fill-opacity="0.72"/>
<circle cx="613.9" cy="317.4" r="1.25" fill="#ffa500" fill-opacity="0.72"/>
<circle cx="615.9" cy="317.0" r="1.25" fill="#ffa500" fill-opacity="0.72"/>
<circle cx="617.2" cy="316.7" r="1.25" fill="#ffa500" fill-opacity="0.72"/>
<circle cx="619.9" cy="285.9" r="1.25" fill="#ffa500" fill-opacity="0.72"/>
<circle cx="627.1" cy="291.1" r="1.25" fill="#ffa500" fill-opacity="0.72"/>
<circle cx="627.4" cy="295.8" r="1.25" fill="#ffa500" fill-opacity="0.72"/>
<circle cx="634.8" cy="278.2" r="1.25" fill="#ffa500" fill-opacity="0.72"/>
<circle cx="633.4" cy="280.9" r="1.25" fill="#ffa500" fill-opacity="0.72"/>
<circle cx="635.2" cy="284.3" r="1.25" fill="#ffa500" fill-opacity="0.72"/>
<circle cx="639.2" cy="280.9" r="1.25" fill="#ffa500" fill-opacity="0.72"/>
<circle cx="640.2" cy="275.1" r="1.25" fill="#ffa500" fill-opacity="0.72"/>
<circle cx="605.5" cy="324.8" r="1.25" fill="#ffa500" fill-opacity="0.72"/>
<circle cx="598.3" cy="327.1" r="1.25" fill="#ffa500" fill-opacity="0.72"/>
<circle cx="611.8" cy="326.2" r="1.25" fill="#ffa500" fill-opacity="0.72"/>
<circle cx="650.2" cy="271.1" r="1.25" fill="#ffa500" fill-opacity="0.72"/>
<circle cx="651.9" cy="272.8" r="1.25" fill="#ffa500" fill-opacity="0.72"/>
<circle cx="644.8" cy="276.2" r="1.25" fill="#ffa500" fill-opacity="0.72"/>
<circle cx="649.5" cy="277.3" r="1.25" fill="#ffa500" fill-opacity="0.72"/>
<circle cx="647.5" cy="282.7" r="1.25" fill="#ffa500" fill-opacity="0.72"/>
<circle cx="643.8" cy="285.4" r="1.25" fill="#ffa500" fill-opacity="0.72"/>
<circle cx="642.5" cy="292.4" r="1.25" fill="#ffa500" fill-opacity="0.72"/>
<circle cx="657.6" cy="289.7" r="1.25" fill="#ffa500" fill-opacity="0.72"/>
<circle cx="650.2" cy="300.5" r="1.25" fill="#ffa500" fill-opacity="0.72"/>
<circle cx="653.3" cy="300.1" r="1.25" fill="#ffa500" fill-opacity="0.72"/>
<circle cx="663.7" cy="302.1" r="1.25" fill="#ffa500" fill-opacity="0.72"/>
<circle cx="676.5" cy="305.5" r="1.25" fill="#ffa500" fill-opacity="0.72"/>
<circle cx="666.4" cy="309.0" r="1.25" fill="#ffa500" fill-opacity="0.72"/>
<circle cx="674.9" cy="314.0" r="1.25" fill="#ffa500" fill-opacity="0.72"/>
<circle cx="679.9" cy="314.7" r="1.25" fill="#ffa500" fill-opacity="0.72"/>
<circle cx="685.7" cy="324.5" r="1.25" fill="#ffa500" fill-opacity="0.72"/>
<circle cx="694.1" cy="325.1" r="1.25" fill="#ffa500" fill-opacity="0.72"/>
<circle cx="698.8" cy="327.1" r="1.25" fill="#ffa500" fill-opacity="0.72"/>
<circle cx="480.7" cy="333.2" r="1.25" fill="#ffa500" fill-opacity="0.72"/>
<circle cx="498.0" cy="339.8" r="1.25" fill="#ffa500" fill-opacity="0.72"/>
<circle cx="501.4" cy="389.9" r="1.25" fill="#ffa500" fill-opacity="0.72"/>
<circle cx="491.3" cy="391.5" r="1.25" fill="#ffa500" fill-opacity="0.72"/>
<circle cx="543.8" cy="330.1" r="1.25" fill="#ffa500" fill-opacity="0.72"/>
<circle cx="549.2" cy="324.7" r="1.25" fill="#ffa500" fill-opacity="0.72"/>
<circle cx="528.3" cy="329.1" r="1.25" fill="#ffa500" fill-opacity="0.72"/>
<circle cx="537.0" cy="333.7" r="1.25" fill="#ffa500" fill-opacity="0.72"/>
<circle cx="539.1" cy="333.2" r="1.25" fill="#ffa500" fill-opacity="0.72"/>
<circle cx="546.5" cy="333.5" r="1.25" fill="#ffa500" fill-opacity="0.72"/>
<circle cx="548.2" cy="333.5" r="1.25" fill="#ffa500" fill-opacity="0.72"/>
<circle cx="532.6" cy="335.5" r="1.25" fill="#ffa500" fill-opacity="0.72"/>
<circle cx="536.4" cy="337.2" r="1.25" fill="#ffa500" fill-opacity="0.72"/>
<circle cx="540.1" cy="337.2" r="1.25" fill="#ffa500" fill-opacity="0.72"/>
<circle cx="550.1" cy="336.8" r="1.25" fill="#ffa500" fill-opacity="0.72"/>
<circle cx="553.9" cy="337.5" r="1.25" fill="#ffa500" fill-opacity="0.72"/>
<circle cx="557.7" cy="335.9" r="1.25" fill="#ffa500" fill-opacity="0.72"/>
<circle cx="535.3" cy="339.9" r="1.25" fill="#ffa500" fill-opacity="0.72"/>
<circle cx="536.1" cy="341.3" r="1.25" fill="#ffa500" fill-opacity="0.72"/>
<circle cx="560.4" cy="340.5" r="1.25" fill="#ffa500" fill-opacity="0.72"/>
<circle cx="562.0" cy="339.9" r="1.25" fill="#ffa500" fill-opacity="0.72"/>
<circle cx="513.7" cy="342.6" r="1.25" fill="#ffa500" fill-opacity="0.72"/>
<circle cx="513.7" cy="350.1" r="1.25" fill="#ffa500" fill-opacity="0.72"/>
<circle cx="527.2" cy="349.0" r="1.25" fill="#ffa500" fill-opacity="0.72"/>
<circle cx="528.3" cy="355.3" r="1.25" fill="#ffa500" fill-opacity="0.72"/>
<circle cx="548.2" cy="344.5" r="1.25" fill="#ffa500" fill-opacity="0.72"/>
<circle cx="550.1" cy="344.3" r="1.25" fill="#ffa500" fill-opacity="0.72"/>
<circle cx="555.3" cy="344.5" r="1.25" fill="#ffa500" fill-opacity="0.72"/>
<circle cx="547.6" cy="347.6" r="1.25" fill="#ffa500" fill-opacity="0.72"/>
<circle cx="558.2" cy="349.4" r="1.25" fill="#ffa500" fill-opacity="0.72"/>
<circle cx="560.0" cy="351.7" r="1.25" fill="#ffa500" fill-opacity="0.72"/>
<circle cx="545.5" cy="352.4" r="1.25" fill="#ffa500" fill-opacity="0.72"/>
<circle cx="556.6" cy="356.7" r="1.25" fill="#ffa500" fill-opacity="0.72"/>
<circle cx="560.7" cy="355.7" r="1.25" fill="#ffa500" fill-opacity="0.72"/>
<circle cx="562.7" cy="354.4" r="1.25" fill="#ffa500" fill-opacity="0.72"/>
<circle cx="566.3" cy="352.1" r="1.25" fill="#ffa500" fill-opacity="0.72"/>
<circle cx="568.8" cy="356.1" r="1.25" fill="#ffa500" fill-opacity="0.72"/>
<circle cx="562.7" cy="358.4" r="1.25" fill="#ffa500" fill-opacity="0.72"/>
<circle cx="565.8" cy="359.1" r="1.25" fill="#ffa500" fill-opacity="0.72"/>
<circle cx="563.4" cy="364.2" r="1.25" fill="#ffa500" fill-opacity="0.72"/>
<circle cx="555.5" cy="365.2" r="1.25" fill="#ffa500" fill-opacity="0.72"/>
<circle cx="546.5" cy="367.2" r="1.25" fill="#ffa500" fill-opacity="0.72"/>
<circle cx="551.2" cy="366.9" r="1.25" fill="#ffa500" fill-opacity="0.72"/>
<circle cx="553.2" cy="369.2" r="1.25" fill="#ffa500" fill-opacity="0.72"/>
<circle cx="564.4" cy="370.6" r="1.25" fill="#ffa500" fill-opacity="0.72"/>
<circle cx="563.6" cy="375.0" r="1.25" fill="#ffa500" fill-opacity="0.72"/>
<circle cx="529.9" cy="380.4" r="1.25" fill="#ffa500" fill-opacity="0.72"/>
<circle cx="534.7" cy="381.0" r="1.25" fill="#ffa500" fill-opacity="0.72"/>
<circle cx="542.8" cy="381.0" r="1.25" fill="#ffa500" fill-opacity="0.72"/>
<circle cx="547.2" cy="379.4" r="1.25" fill="#ffa500" fill-opacity="0.72"/>
<circle cx="550.9" cy="378.7" r="1.25" fill="#ffa500" fill-opacity="0.72"/>
<circle cx="553.6" cy="380.3" r="1.25" fill="#ffa500" fill-opacity="0.72"/>
<circle cx="569.8" cy="380.4" r="1.25" fill="#ffa500" fill-opacity="0.72"/>
<circle cx="520.8" cy="386.8" r="1.25" fill="#ffa500" fill-opacity="0.72"/>
<circle cx="529.3" cy="391.1" r="1.25" fill="#ffa500" fill-opacity="0.72"/>
<circle cx="545.5" cy="390.2" r="1.25" fill="#ffa500" fill-opacity="0.72"/>
<circle cx="563.1" cy="391.1" r="1.25" fill="#ffa500" fill-opacity="0.72"/>
<circle cx="575.5" cy="374.2" r="1.25" fill="#ffa500" fill-opacity="0.72"/>
<circle cx="575.5" cy="378.0" r="1.25" fill="#ffa500" fill-opacity="0.72"/>
<circle cx="576.2" cy="355.3" r="1.25" fill="#ffa500" fill-opacity="0.72"/>
<circle cx="544.7" cy="324.7" r="1.25" fill="#ffa500" fill-opacity="0.72"/>
<circle cx="594.3" cy="325.4" r="1.25" fill="#ffa500" fill-opacity="0.72"/>
<circle cx="601.7" cy="325.6" r="1.25" fill="#ffa500" fill-opacity="0.72"/>
<circle cx="595.6" cy="332.4" r="1.25" fill="#ffa500" fill-opacity="0.72"/>
<circle cx="600.1" cy="331.8" r="1.25" fill="#ffa500" fill-opacity="0.72"/>
<circle cx="592.3" cy="337.5" r="1.25" fill="#ffa500" fill-opacity="0.72"/>
<circle cx="597.4" cy="337.2" r="1.25" fill="#ffa500" fill-opacity="0.72"/>
<circle cx="598.3" cy="339.9" r="1.25" fill="#ffa500" fill-opacity="0.72"/>
<circle cx="593.9" cy="344.3" r="1.25" fill="#ffa500" fill-opacity="0.72"/>
<circle cx="602.8" cy="344.3" r="1.25" fill="#ffa500" fill-opacity="0.72"/>
<circle cx="603.7" cy="342.2" r="1.25" fill="#ffa500" fill-opacity="0.72"/>
<circle cx="595.0" cy="348.6" r="1.25" fill="#ffa500" fill-opacity="0.72"/>
<circle cx="592.0" cy="350.3" r="1.25" fill="#ffa500" fill-opacity="0.72"/>
<circle cx="591.6" cy="352.4" r="1.25" fill="#ffa500" fill-opacity="0.72"/>
<circle cx="593.6" cy="352.4" r="1.25" fill="#ffa500" fill-opacity="0.72"/>
<circle cx="603.7" cy="349.9" r="1.25" fill="#ffa500" fill-opacity="0.72"/>
<circle cx="605.8" cy="336.8" r="1.25" fill="#ffa500" fill-opacity="0.72"/>
<circle cx="608.7" cy="336.4" r="1.25" fill="#ffa500" fill-opacity="0.72"/>
<circle cx="611.8" cy="336.2" r="1.25" fill="#ffa500" fill-opacity="0.72"/>
<circle cx="614.9" cy="335.1" r="1.25" fill="#ffa500" fill-opacity="0.72"/>
<circle cx="618.2" cy="332.8" r="1.25" fill="#ffa500" fill-opacity="0.72"/>
<circle cx="614.9" cy="340.5" r="1.25" fill="#ffa500" fill-opacity="0.72"/>
<circle cx="619.0" cy="343.6" r="1.25" fill="#ffa500" fill-opacity="0.72"/>
<circle cx="609.5" cy="348.3" r="1.25" fill="#ffa500" fill-opacity="0.72"/>
<circle cx="603.1" cy="356.1" r="1.25" fill="#ffa500" fill-opacity="0.72"/>
<circle cx="600.1" cy="358.0" r="1.25" fill="#ffa500" fill-opacity="0.72"/>
<circle cx="619.0" cy="355.7" r="1.25" fill="#ffa500" fill-opacity="0.72"/>
<circle cx="605.1" cy="364.5" r="1.25" fill="#ffa500" fill-opacity="0.72"/>
<circle cx="604.4" cy="372.6" r="1.25" fill="#ffa500" fill-opacity="0.72"/>
<circle cx="593.6" cy="379.6" r="1.25" fill="#ffa500" fill-opacity="0.72"/>
<circle cx="579.4" cy="348.3" r="1.25" fill="#ffa500" fill-opacity="0.72"/>
<circle cx="581.2" cy="351.7" r="1.25" fill="#ffa500" fill-opacity="0.72"/>
<circle cx="580.4" cy="356.1" r="1.25" fill="#ffa500" fill-opacity="0.72"/>
<circle cx="576.7" cy="358.0" r="1.25" fill="#ffa500" fill-opacity="0.72"/>
<circle cx="579.4" cy="365.2" r="1.25" fill="#ffa500" fill-opacity="0.72"/>
<circle cx="586.6" cy="366.9" r="1.25" fill="#ffa500" fill-opacity="0.72"/>
<circle cx="631.1" cy="332.4" r="1.25" fill="#ffa500" fill-opacity="0.72"/>
<circle cx="639.2" cy="337.2" r="1.25" fill="#ffa500" fill-opacity="0.72"/>
<circle cx="637.1" cy="342.2" r="1.25" fill="#ffa500" fill-opacity="0.72"/>
<circle cx="623.3" cy="372.6" r="1.25" fill="#ffa500" fill-opacity="0.72"/>
<circle cx="632.8" cy="372.2" r="1.25" fill="#ffa500" fill-opacity="0.72"/>
<circle cx="631.1" cy="381.4" r="1.25" fill="#ffa500" fill-opacity="0.72"/>
<circle cx="639.2" cy="379.1" r="1.25" fill="#ffa500" fill-opacity="0.72"/>
<circle cx="573.4" cy="351.0" r="1.25" fill="#ffa500" fill-opacity="0.72"/>
<circle cx="688.0" cy="328.7" r="1.25" fill="#ffa500" fill-opacity="0.72"/>
<circle cx="692.0" cy="329.1" r="1.25" fill="#ffa500" fill-opacity="0.72"/>
<circle cx="694.1" cy="336.8" r="1.25" fill="#ffa500" fill-opacity="0.72"/>
<circle cx="652.2" cy="348.0" r="1.25" fill="#ffa500" fill-opacity="0.72"/>
<circle cx="656.9" cy="349.4" r="1.25" fill="#ffa500" fill-opacity="0.72"/>
<circle cx="665.7" cy="347.0" r="1.25" fill="#ffa500" fill-opacity="0.72"/>
<circle cx="664.6" cy="349.9" r="1.25" fill="#ffa500" fill-opacity="0.72"/>
<circle cx="669.8" cy="351.0" r="1.25" fill="#ffa500" fill-opacity="0.72"/>
<circle cx="671.8" cy="353.0" r="1.25" fill="#ffa500" fill-opacity="0.72"/>
<circle cx="673.8" cy="351.7" r="1.25" fill="#ffa500" fill-opacity="0.72"/>
<circle cx="674.9" cy="345.3" r="1.25" fill="#ffa500" fill-opacity="0.72"/>
<circle cx="665.0" cy="355.5" r="1.25" fill="#ffa500" fill-opacity="0.72"/>
<circle cx="689.3" cy="344.0" r="1.25" fill="#ffa500" fill-opacity="0.72"/>
<circle cx="689.3" cy="347.2" r="1.25" fill="#ffa500" fill-opacity="0.72"/>
<circle cx="692.7" cy="348.6" r="1.25" fill="#ffa500" fill-opacity="0.72"/>
<circle cx="694.1" cy="348.0" r="1.25" fill="#ffa500" fill-opacity="0.72"/>
<circle cx="642.5" cy="360.7" r="1.25" fill="#ffa500" fill-opacity="0.72"/>
<circle cx="648.8" cy="360.2" r="1.25" fill="#ffa500" fill-opacity="0.72"/>
<circle cx="654.9" cy="366.8" r="1.25" fill="#ffa500" fill-opacity="0.72"/>
<circle cx="657.3" cy="367.5" r="1.25" fill="#ffa500" fill-opacity="0.72"/>
<circle cx="652.9" cy="376.4" r="1.25" fill="#ffa500" fill-opacity="0.72"/>
<circle cx="486.9" cy="413.7" r="1.25" fill="#ffa500" fill-opacity="0.72"/>
<circle cx="485.2" cy="416.1" r="1.25" fill="#ffa500" fill-opacity="0.72"/>
<circle cx="488.6" cy="418.8" r="1.25" fill="#ffa500" fill-opacity="0.72"/>
<circle cx="492.9" cy="416.0" r="1.25" fill="#ffa500" fill-opacity="0.72"/>
<circle cx="496.7" cy="411.6" r="1.25" fill="#ffa500" fill-opacity="0.72"/>
<circle cx="498.7" cy="417.0" r="1.25" fill="#ffa500" fill-opacity="0.72"/>
<circle cx="484.2" cy="427.8" r="1.25" fill="#ffa500" fill-opacity="0.72"/>
<circle cx="544.5" cy="411.6" r="1.25" fill="#ffa500" fill-opacity="0.72"/>
<circle cx="556.3" cy="410.3" r="1.25" fill="#ffa500" fill-opacity="0.72"/>
<circle cx="558.0" cy="408.3" r="1.25" fill="#ffa500" fill-opacity="0.72"/>
<circle cx="550.9" cy="419.1" r="1.25" fill="#ffa500" fill-opacity="0.72"/>
<circle cx="547.8" cy="422.0" r="1.25" fill="#ffa500" fill-opacity="0.72"/>
<circle cx="546.1" cy="425.1" r="1.25" fill="#ffa500" fill-opacity="0.72"/>
<circle cx="573.5" cy="421.8" r="1.25" fill="#ffa500" fill-opacity="0.72"/>
<circle cx="556.3" cy="433.9" r="1.25" fill="#ffa500" fill-opacity="0.72"/>
<circle cx="559.3" cy="435.0" r="1.25" fill="#ffa500" fill-opacity="0.72"/>
<circle cx="561.3" cy="435.3" r="1.25" fill="#ffa500" fill-opacity="0.72"/>
<circle cx="558.6" cy="439.0" r="1.25" fill="#ffa500" fill-opacity="0.72"/>
<circle cx="556.9" cy="442.3" r="1.25" fill="#ffa500" fill-opacity="0.72"/>
<circle cx="550.9" cy="446.1" r="1.25" fill="#ffa500" fill-opacity="0.72"/>
<circle cx="542.4" cy="436.9" r="1.25" fill="#ffa500" fill-opacity="0.72"/>
<circle cx="536.4" cy="435.3" r="1.25" fill="#ffa500" fill-opacity="0.72"/>
<circle cx="535.7" cy="437.3" r="1.25" fill="#ffa500" fill-opacity="0.72"/>
<circle cx="534.3" cy="439.6" r="1.25" fill="#ffa500" fill-opacity="0.72"/>
<circle cx="536.4" cy="441.7" r="1.25" fill="#ffa500" fill-opacity="0.72"/>
<circle cx="538.0" cy="444.7" r="1.25" fill="#ffa500" fill-opacity="0.72"/>
<circle cx="537.0" cy="446.3" r="1.25" fill="#ffa500" fill-opacity="0.72"/>
<circle cx="528.3" cy="446.1" r="1.25" fill="#ffa500" fill-opacity="0.72"/>
<circle cx="539.7" cy="449.4" r="1.25" fill="#ffa500" fill-opacity="0.72"/>
<circle cx="545.5" cy="448.8" r="1.25" fill="#ffa500" fill-opacity="0.72"/>
<circle cx="623.0" cy="395.8" r="1.25" fill="#ffa500" fill-opacity="0.72"/>
<circle cx="640.2" cy="399.1" r="1.25" fill="#ffa500" fill-opacity="0.72"/>
<circle cx="579.8" cy="408.9" r="1.25" fill="#ffa500" fill-opacity="0.72"/>
<circle cx="584.8" cy="414.3" r="1.25" fill="#ffa500" fill-opacity="0.72"/>
<circle cx="588.9" cy="414.3" r="1.25" fill="#ffa500" fill-opacity="0.72"/>
<circle cx="583.9" cy="418.0" r="1.25" fill="#ffa500" fill-opacity="0.72"/>
<circle cx="636.5" cy="419.7" r="1.25" fill="#ffa500" fill-opacity="0.72"/>
<circle cx="648.8" cy="393.7" r="1.25" fill="#ffa500" fill-opacity="0.72"/>
<circle cx="643.4" cy="403.5" r="1.25" fill="#ffa500" fill-opacity="0.72"/>
<circle cx="644.1" cy="409.3" r="1.25" fill="#ffa500" fill-opacity="0.72"/>
<circle cx="646.1" cy="412.3" r="1.25" fill="#ffa500" fill-opacity="0.72"/>
<circle cx="646.1" cy="414.7" r="1.25" fill="#ffa500" fill-opacity="0.72"/>
<circle cx="645.2" cy="418.4" r="1.25" fill="#ffa500" fill-opacity="0.72"/>
<circle cx="651.1" cy="419.1" r="1.25" fill="#ffa500" fill-opacity="0.72"/>
<circle cx="651.9" cy="421.8" r="1.25" fill="#ffa500" fill-opacity="0.72"/>
<circle cx="644.8" cy="422.4" r="1.25" fill="#ffa500" fill-opacity="0.72"/>
<circle cx="648.8" cy="425.5" r="1.25" fill="#ffa500" fill-opacity="0.72"/>
</g>
<line x1="574.75" y1="198.00" x2="574.75" y2="453.50" stroke="#000" stroke-width="1" stroke-opacity="0.45"/>
<line x1="447.00" y1="325.75" x2="702.50" y2="325.75" stroke="#000" stroke-width="1" stroke-opacity="0.45"/>
<rect x="447.00" y="198.00" width="255.50" height="255.50" fill="none" stroke="#333" stroke-width="1"/>
<line x1="447.00" y1="453.50" x2="447.00" y2="456.00" stroke="#333" stroke-width="0.8"/>
<text x="447.00" y="462.90" font-family="Liberation Sans, sans-serif" font-size="6.2" text-anchor="middle" fill="#262626">−10.0</text>
<line x1="444.50" y1="453.50" x2="447.00" y2="453.50" stroke="#333" stroke-width="0.8"/>
<text x="441.50" y="455.70" font-family="Liberation Sans, sans-serif" font-size="6.2" text-anchor="end" fill="#262626">−10.0</text>
<line x1="478.94" y1="453.50" x2="478.94" y2="456.00" stroke="#333" stroke-width="0.8"/>
<text x="478.94" y="462.90" font-family="Liberation Sans, sans-serif" font-size="6.2" text-anchor="middle" fill="#262626">−7.5</text>
<line x1="444.50" y1="421.56" x2="447.00" y2="421.56" stroke="#333" stroke-width="0.8"/>
<text x="441.50" y="423.76" font-family="Liberation Sans, sans-serif" font-size="6.2" text-anchor="end" fill="#262626">−7.5</text>
<line x1="510.88" y1="453.50" x2="510.88" y2="456.00" stroke="#333" stroke-width="0.8"/>
<text x="510.88" y="462.90" font-family="Liberation Sans, sans-serif" font-size="6.2" text-anchor="middle" fill="#262626">−5.0</text>
<line x1="444.50" y1="389.62" x2="447.00" y2="389.62" stroke="#333" stroke-width="0.8"/>
<text x="441.50" y="391.82" font-family="Liberation Sans, sans-serif" font-size="6.2" text-anchor="end" fill="#262626">−5.0</text>
<line x1="542.81" y1="453.50" x2="542.81" y2="456.00" stroke="#333" stroke-width="0.8"/>
<text x="542.81" y="462.90" font-family="Liberation Sans, sans-serif" font-size="6.2" text-anchor="middle" fill="#262626">−2.5</text>
<line x1="444.50" y1="357.69" x2="447.00" y2="357.69" stroke="#333" stroke-width="0.8"/>
<text x="441.50" y="359.89" font-family="Liberation Sans, sans-serif" font-size="6.2" text-anchor="end" fill="#262626">−2.5</text>
<line x1="574.75" y1="453.50" x2="574.75" y2="456.00" stroke="#333" stroke-width="0.8"/>
<text x="574.75" y="462.90" font-family="Liberation Sans, sans-serif" font-size="6.2" text-anchor="middle" fill="#262626">0.0</text>
<line x1="444.50" y1="325.75" x2="447.00" y2="325.75" stroke="#333" stroke-width="0.8"/>
<text x="441.50" y="327.95" font-family="Liberation Sans, sans-serif" font-size="6.2" text-anchor="end" fill="#262626">0.0</text>
<line x1="606.69" y1="453.50" x2="606.69" y2="456.00" stroke="#333" stroke-width="0.8"/>
<text x="606.69" y="462.90" font-family="Liberation Sans, sans-serif" font-size="6.2" text-anchor="middle" fill="#262626">2.5</text>
<line x1="444.50" y1="293.81" x2="447.00" y2="293.81" stroke="#333" stroke-width="0.8"/>
<text x="441.50" y="296.01" font-family="Liberation Sans, sans-serif" font-size="6.2" text-anchor="end" fill="#262626">2.5</text>
<line x1="638.62" y1="453.50" x2="638.62" y2="456.00" stroke="#333" stroke-width="0.8"/>
<text x="638.62" y="462.90" font-family="Liberation Sans, sans-serif" font-size="6.2" text-anchor="middle" fill="#262626">5.0</text>
<line x1="444.50" y1="261.88" x2="447.00" y2="261.88" stroke="#333" stroke-width="0.8"/>
<text x="441.50" y="264.07" font-family="Liberation Sans, sans-serif" font-size="6.2" text-anchor="end" fill="#262626">5.0</text>
<line x1="670.56" y1="453.50" x2="670.56" y2="456.00" stroke="#333" stroke-width="0.8"/>
<text x="670.56" y="462.90" font-family="Liberation Sans, sans-serif" font-size="6.2" text-anchor="middle" fill="#262626">7.5</text>
<line x1="444.50" y1="229.94" x2="447.00" y2="229.94" stroke="#333" stroke-width="0.8"/>
<text x="441.50" y="232.14" font-family="Liberation Sans, sans-serif" font-size="6.2" text-anchor="end" fill="#262626">7.5</text>
<line x1="702.50" y1="453.50" x2="702.50" y2="456.00" stroke="#333" stroke-width="0.8"/>
<text x="702.50" y="462.90" font-family="Liberation Sans, sans-serif" font-size="6.2" text-anchor="middle" fill="#262626">10.0</text>
<line x1="444.50" y1="198.00" x2="447.00" y2="198.00" stroke="#333" stroke-width="0.8"/>
<text x="441.50" y="200.20" font-family="Liberation Sans, sans-serif" font-size="6.2" text-anchor="end" fill="#262626">10.0</text>
<text x="574.6" y="194.0" font-family="Liberation Sans, sans-serif" font-size="8.2" text-anchor="middle" fill="#262626">SSB Components Constellation (Raw, Unequalized)</text>
<rect x="642.2" y="201.2" width="57.1" height="35.2" rx="1.2" fill="#fff" fill-opacity="0.8" stroke="#d8d8d8" stroke-width="0.6"/>
<circle cx="650.1" cy="206.10" r="1.1" fill="#ff4d4d"/>
<text x="661" y="208.20" font-family="Liberation Sans, sans-serif" font-size="5.8" fill="#262626">PSS</text>
<circle cx="650.1" cy="214.55" r="1.1" fill="#4d4dff"/>
<text x="661" y="216.65" font-family="Liberation Sans, sans-serif" font-size="5.8" fill="#262626">SSS</text>
<circle cx="650.1" cy="223.00" r="1.1" fill="#4da64d"/>
<text x="661" y="225.10" font-family="Liberation Sans, sans-serif" font-size="5.8" fill="#262626">PBCH DMRS</text>
<circle cx="650.1" cy="231.45" r="1.1" fill="#ffc04d"/>
<text x="661" y="233.55" font-family="Liberation Sans, sans-serif" font-size="5.8" fill="#262626">PBCH</text>
</svg>

<div class="a" style="left:175px;top:473px;width:1px;height:1px;background:#aaa"></div><div class="a" style="left:183px;top:473px;width:1px;height:1px;background:#aaa"></div><div class="a" style="left:196px;top:473px;width:1px;height:1px;background:#aaa"></div>
<!-- toolbar -->
<svg class="a" style="left:0;top:0" width="140" height="504" viewBox="0 0 140 504">
<g fill="#000">
<polygon points="16.6,481.9 22.4,486.9 21.4,487.6 16.6,483.5 11.8,487.6 10.8,486.9"/>
<rect x="19.4" y="482.3" width="1.4" height="3.2"/>
<polygon points="16.6,484.4 20.8,488 20.8,491 17.7,491 17.7,488.4 15.5,488.4 15.5,491 12.4,491 12.4,488"/>
</g>
<g fill="none" stroke="#6e6e6e" stroke-width="2.2" stroke-linecap="round" stroke-linejoin="round">
<polyline points="33.4,481.6 29.2,485.7 33.4,489.8"/><line x1="29.6" y1="485.7" x2="37.4" y2="485.7"/>
<polyline points="48.6,481.6 52.8,485.7 48.6,489.8"/><line x1="44.6" y1="485.7" x2="52.4" y2="485.7"/>
</g>
<line x1="59.6" y1="479" x2="59.6" y2="491.6" stroke="#a8a8a8" stroke-width="0.8"/>
<line x1="110.4" y1="479" x2="110.4" y2="491.6" stroke="#a8a8a8" stroke-width="0.8"/>
<g fill="#000">
<rect x="68.6" y="481.5" width="1.8" height="8.5"/><rect x="64.8" y="484.9" width="9.5" height="1.8"/>
<polygon points="69.5,479.4 72,482.3 67,482.3"/><polygon points="69.5,491.8 72,488.9 67,488.9"/>
<polygon points="63.1,485.8 66,483.3 66,488.3"/><polygon points="75.6,485.8 72.7,483.3 72.7,488.3"/>
</g>
<circle cx="83.4" cy="485.1" r="3.6" fill="none" stroke="#000" stroke-width="1.7"/>
<line x1="85.9" y1="487.6" x2="89.4" y2="490.6" stroke="#000" stroke-width="1.8" stroke-linecap="round"/>
<g stroke="#000" stroke-width="1.1">
<line x1="95.2" y1="482.2" x2="105.8" y2="482.2"/><line x1="95.2" y1="485.8" x2="105.8" y2="485.8"/><line x1="95.2" y1="489" x2="105.8" y2="489"/>
</g>
<g fill="#000"><circle cx="98.2" cy="482.2" r="1.3"/><circle cx="102.6" cy="485.8" r="1.3"/><circle cx="99" cy="489" r="1.3"/></g>
<path d="M116.5,480.6 H123.8 L126.2,483 V490.2 H116.5 Z" fill="#d9d9d9" stroke="#1e1e1e" stroke-width="1.3"/>
<rect x="118.1" y="480.6" width="5.5" height="3.9" fill="#1e1e1e"/>
<rect x="120.5" y="481.4" width="1.7" height="2.3" fill="#d0d0d0"/>
<rect x="118.6" y="487" width="5.8" height="3" fill="#f2f2f2" stroke="#1e1e1e" stroke-width="1"/>
</svg>
</body></html>
